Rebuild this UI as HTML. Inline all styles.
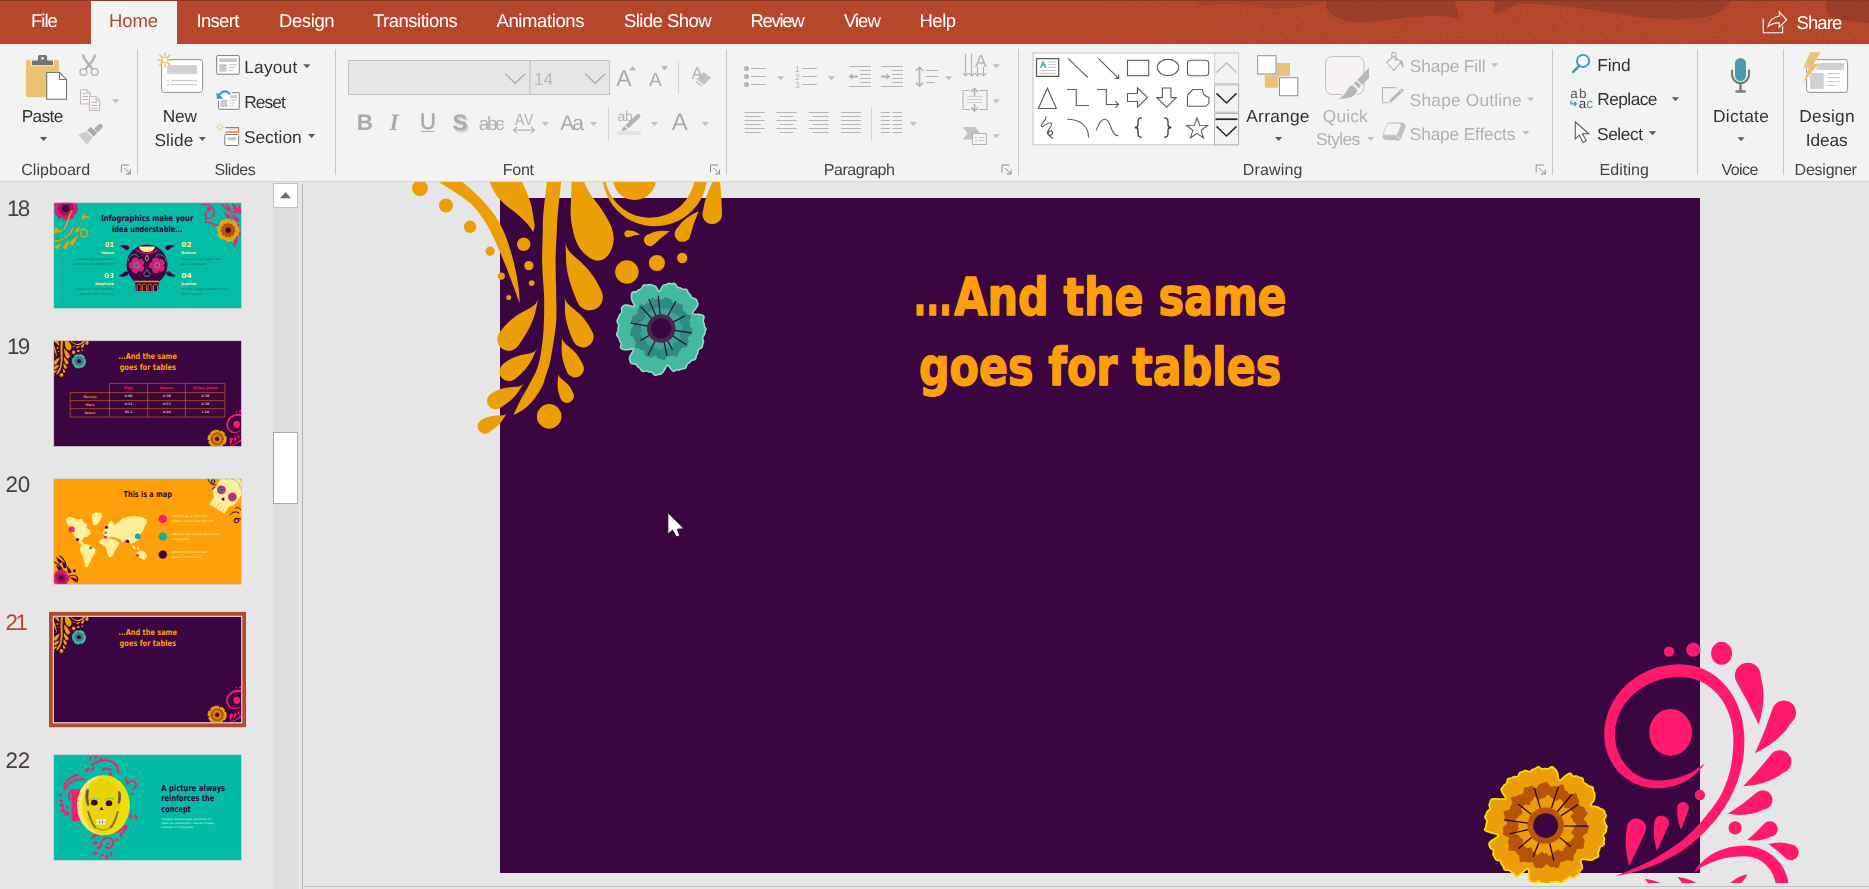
<!DOCTYPE html>
<html lang="en"><head><meta charset="utf-8"><title>PowerPoint</title>
<style>
html,body{margin:0;padding:0}
body{width:1869px;height:889px;overflow:hidden;position:relative;background:#e6e6e6;font-family:"Liberation Sans",sans-serif;text-rendering:geometricPrecision}
.a{position:absolute}
.t{position:absolute;white-space:pre;line-height:normal}
svg{position:absolute;overflow:visible}
#titlebar{left:0;top:0;width:1869px;height:44px;background:#b7472a}
#ribbon{left:0;top:44px;width:1869px;height:137px;background:#f3f3f3;border-bottom:1px solid #d6d6d6}
.sep{position:absolute;width:1px;background:#c8c8c8;top:49px;height:126px}
.ssep{position:absolute;width:1px;background:#d4d4d4}
</style></head><body>
<div id="titlebar" class="a"></div>
<svg class="a" style="left:0;top:0" width="1869" height="44" viewBox="0 0 1869 44">
<path d="M1198.700 0V6.500C1215 4 1225 3.500 1236 3.700C1250 4.500 1262 7.500 1273.600 8.400C1283 8.600 1290 8 1296 7.500C1308 6 1318 3.500 1327 0z" fill="#a7432b"/>
<g fill="#9b3f2a">
<path d="M1326 0V7.500C1330 14 1336 19 1348.500 21.500C1355 22.500 1362 22.300 1367.300 22C1380 21 1392 19 1404.700 17.800C1418 16.500 1430 15.800 1442.200 16C1449 16.500 1455 18 1460 19.700L1455.300 3.700L1455 0z"/>
<path d="M1494.600 0L1493.700 14C1498 12 1503 10 1507.700 8.400C1512 6.500 1516 4.800 1520 3.700C1532 3.500 1545 4.300 1557 5.600C1570 7 1582 8.500 1594.700 10.300C1608 12.300 1620 14 1632 15.900C1645 17.800 1657 19 1669.400 19.200C1679 19.400 1689 19.200 1697.400 18.300C1705 17.500 1711 16 1716 14C1720 12 1723 10 1725.400 7.500C1728 5 1730.500 2.500 1733 0z"/>
<path d="M1826.300 0V9.300C1827 13 1830 15.500 1833.700 16.800C1840 19 1846 20.500 1852.400 21.500C1858 22.300 1864 23 1869 23.300V0z"/>
</g>
<defs><filter id="gr" x="0" y="0" width="100%" height="100%" color-interpolation-filters="sRGB"><feTurbulence type="fractalNoise" baseFrequency=".8" numOctaves="2" seed="3" result="t"/><feColorMatrix in="t" type="matrix" values="0 0 0 0 .42  0 0 0 0 .15  0 0 0 0 .09  0 0 0 -10 3.800"/></filter>
<linearGradient id="gm" x1="0" x2="1"><stop offset="0" stop-color="#fff" stop-opacity="0"/><stop offset=".25" stop-color="#fff" stop-opacity="1"/></linearGradient><mask id="mk"><rect x="1080" y="0" width="789" height="44" fill="url(#gm)"/></mask></defs>
<rect x="1080" y="1" width="789" height="43" filter="url(#gr)" mask="url(#mk)" opacity=".28"/>
<rect x="0" y="0" width="1869" height="1" fill="#8a3822"/>
</svg>

<div id="ribbon" class="a"></div>
<div class="a" style="left:91px;top:1px;width:86px;height:44px;background:#f3f3f3"></div>
<div class="sep" style="left:137px"></div>
<div class="sep" style="left:335px"></div>
<div class="sep" style="left:726px"></div>
<div class="sep" style="left:1018px"></div>
<div class="sep" style="left:1552px"></div>
<div class="sep" style="left:1697px"></div>
<div class="sep" style="left:1783px"></div>
<svg class="a" style="left:0;top:0" width="1869" height="190" viewBox="0 0 1869 190">
<defs>
<path id="dd" d="M0 0h7.2l-3.6 4z"/>
<g id="burst"><g stroke="#eec46e" stroke-width="1.5" stroke-linecap="butt"><path d="M0-7.6V7.6M-7.6 0H7.6M-5.4-5.4L5.4 5.4M-5.4 5.4L5.4-5.4"/></g><circle r="2.7" fill="#fff" stroke="#eec46e" stroke-width=".8"/></g>
<g id="dlg" fill="none" stroke="#8c8c8c" stroke-width="1"><path d="M.5 8V.5H8M3.5 3.5l6 6M9.5 5v4.5H5"/></g>
</defs>
<!-- ===== Clipboard ===== -->
<rect x="25.9" y="59.8" width="33.2" height="37.4" rx="2.6" fill="#ebc274"/>
<rect x="30.9" y="59.6" width="23.1" height="6.6" fill="#f3f3f3"/>
<path d="M38 60.5v-3.7a1.8 1.8 0 0 1 1.8-1.8h5.5a1.8 1.8 0 0 1 1.8 1.8v3.7h4.5a1.4 1.4 0 0 1 1.4 1.4v3.3h-21.1v-3.3a1.4 1.4 0 0 1 1.4-1.4z" fill="#737373"/>
<circle cx="42.6" cy="58.4" r="1.4" fill="#f3f3f3"/>
<path d="M46.7 72.5h12.9l6.9 6.9v19.8h-19.8z" fill="#fff" stroke="#737373" stroke-width="1.1"/>
<path d="M59.4 72.6v6.9h7" fill="none" stroke="#737373" stroke-width="1.1"/>
<use href="#dd" x="40" y="137" fill="#5a5a5a"/>
<!-- cut -->
<g fill="none" stroke="#b3b3b3">
<path d="M83.2 54.6c0 3.5 2.5 6.5 5.8 10.3l4.2 4.6M95 54.6c0 3.5-2.500 6.500-5.800 10.300l-4.200 4.600" stroke-width="2.400"/>
<circle cx="83.400" cy="72" r="3.400" stroke-width="1.300"/><circle cx="94.700" cy="72" r="3.400" stroke-width="1.300"/>
</g>
<!-- copy -->
<g fill="#f8f1f8" stroke="#b9b9b9" stroke-width="1">
<path d="M80.500 89.800h6.600l3.400 3.400v10.700h-10z"/><path d="M87 89.900v3.400h3.400" fill="none"/>
<path d="M89.500 96.500h6.600l3.600 3.600v10.400h-10.200z"/><path d="M96 96.600v3.600h3.600" fill="none"/>
<path d="M82.500 93.500h3M82.500 96.500h5.500M82.500 99.500h5.500M91.500 102.500h6M91.500 105.500h6M91.500 108.300h6" fill="none"/>
</g>
<use href="#dd" x="112" y="99.300" fill="#bdbdbd"/>
<!-- format painter -->
<g>
<path d="M96.200 130.800l4.500-4.600a1.600 1.600 0 0 0-3.500-3.500l-4.500 4.600z" fill="#b0b0b0" transform="translate(1.300 1.800)"/>
<path d="M87.300 130.200l3.500-3.500 6.300 6.300-3.500 3.500z" fill="#a9a9a9"/>
<path d="M86.300 131.200l6.300 6.300-5.700 7.200-8.600-10z" fill="#cdcdcd"/>
</g>
<use href="#dlg" x="120.800" y="164.500"/>
<!-- ===== Slides ===== -->
<rect x="161.600" y="59.600" width="41" height="32.800" rx="2.800" fill="#fff" stroke="#8e8e8e" stroke-width="1"/>
<rect x="167.200" y="65.200" width="29.800" height="8.600" fill="#d0d0d0"/>
<path d="M167.200 80.700h1.800M171.200 80.700h25.800M167.200 84.700h1.800M171.200 84.700h25.800" stroke="#c2c2c2" stroke-width="1"/>
<use href="#burst" x="164.900" y="60"/>
<use href="#dd" x="198.800" y="137" fill="#5a5a5a"/>
<!-- layout -->
<rect x="216.700" y="55.600" width="22.600" height="18.600" rx="1.200" fill="#fff" stroke="#7c7c7c" stroke-width="1"/>
<rect x="219.200" y="58.300" width="17.600" height="3.700" fill="#c9c9c9"/>
<rect x="219.200" y="64.100" width="7.400" height="7.600" fill="#c9c9c9"/>
<path d="M228.900 64.700h7.900M228.900 67.500h6M228.900 70.400h4.500" stroke="#c2c2c2" stroke-width="1"/>
<use href="#dd" x="303.200" y="64.200" fill="#5a5a5a"/>
<!-- reset -->
<rect x="218.500" y="92.700" width="20.800" height="16.600" rx="1.200" fill="#fff" stroke="#7c7c7c" stroke-width="1"/>
<rect x="230.500" y="95.200" width="6.500" height="2.800" fill="#c9c9c9"/>
<rect x="220.400" y="99.600" width="7" height="7.400" fill="#c9c9c9"/>
<path d="M229.500 100.200h7.400M229.500 103h6M229.500 105.800h4.500" stroke="#c2c2c2" stroke-width="1"/>
<path d="M216 91.500h16v3.500h-10v6h-6z" fill="#f3f3f3"/>
<path d="M230 94.500c-1.500-3.200-6-4.200-9-1.500l-2.200 2.300" fill="none" stroke="#3c9db3" stroke-width="2.200"/>
<path d="M216.400 92.400l.5 6.600 6.600-.6z" fill="#3c9db3"/>
<!-- section -->
<use href="#burst" transform="translate(220.300 127.300) scale(.54)"/>
<path d="M225.500 127.700h13v4.400h-13" fill="none" stroke="#d0702a" stroke-width="1.200"/>
<rect x="224.800" y="134.500" width="13.800" height="11" rx="1" fill="#fff" stroke="#7c7c7c" stroke-width="1"/>
<rect x="227.400" y="137" width="8.400" height="3.400" fill="#c9c9c9"/>
<use href="#dd" x="308" y="134" fill="#5a5a5a"/>
<!-- ===== Font ===== -->
<rect x="348.500" y="60.500" width="261" height="34" fill="#e6e6e6" stroke="#c3c3c3" stroke-width="1"/>
<path d="M530 60.500v34" stroke="#c3c3c3" stroke-width="1.200"/>
<path d="M505.200 73.700l10 9.600 10-9.600M585.200 73.700l10 9.600 10-9.600" fill="none" stroke="#ababab" stroke-width="1.300"/>
<path d="M629 70.200l3.500-4 3.500 4zM661 66.200h7l-3.500 4z" fill="#b3b3b3"/>
<path d="M678.500 61v33M608.500 108v32" stroke="#d4d4d4" stroke-width="1"/>
<!-- clear formatting eraser -->
<path d="M703.600 72.800l6.600 5-6.300 6.200-6.800-4.700z" fill="#c4c4c4" stroke="#c4c4c4" stroke-width="1.200" stroke-linejoin="round"/>
<path d="M696 81.600l6 4.300" stroke="#c4c4c4" stroke-width="1.600"/>
<!-- U underline, abc strike, AV arrow -->
<path d="M421 131.500h13" stroke="#ababab" stroke-width="1.100"/>
<path d="M479.500 124.900h24.800" stroke="#b3b3b3" stroke-width="1"/>
<path d="M513.500 130.100h21M517 127l-3.500 3.100 3.500 3.100M531 127l3.500 3.100-3.500 3.100" fill="none" stroke="#b3b3b3" stroke-width="1.200"/>
<use href="#dd" x="541.800" y="122" fill="#c0c0c0"/>
<use href="#dd" x="589.900" y="122" fill="#c0c0c0"/>
<use href="#dd" x="650.900" y="122" fill="#c0c0c0"/>
<use href="#dd" x="701.800" y="122" fill="#c0c0c0"/>
<!-- highlighter -->
<rect x="616.900" y="131" width="24" height="4" fill="#e4e0e4"/>
<path d="M636.800 114.600a2.100 2.100 0 0 1 3 3l-11.200 10.600-3.500-2.700zM624.200 126.300l3.400 2.800-3.200 1.600h-3.300z" fill="#b3b3b3"/>
<use href="#dlg" x="710" y="164.500"/>
<!-- ===== Paragraph ===== -->
<g stroke="#b5b5b5" stroke-width="1" fill="none">
<!-- bullets -->
<path d="M751 68.500h15M751 76.500h15M751 84.500h15"/>
<!-- numbering -->
<path d="M802 68.500h15M802 76.500h15M802 84.500h15"/>
<!-- decrease indent -->
<path d="M849 66.500h22M860 70.500h11M860 74.500h11M860 78.500h11M860 82.500h11M849 86.500h22"/>
<!-- increase indent -->
<path d="M881 66.500h22M892 70.500h11M892 74.500h11M892 78.500h11M892 82.500h11M881 86.500h22"/>
<!-- line spacing -->
<path d="M926 70.500h12M926 76.500h12M926 82.500h9"/>
<!-- align -->
<path d="M744.600 112.500h20M744.600 116.500h16M744.600 120.500h20M744.600 124.500h16M744.600 128.500h20M744.600 132.500h16"/>
<path d="M776.700 112.500h20M779.700 116.500h14M776.700 120.500h20M779.700 124.500h14M776.700 128.500h20M779.700 132.500h14"/>
<path d="M808.800 112.500h20M812.800 116.500h16M808.800 120.500h20M812.800 124.500h16M808.800 128.500h20M812.800 132.500h16"/>
<path d="M840.900 112.500h20M840.900 116.500h20M840.900 120.500h20M840.900 124.500h20M840.900 128.500h20M840.900 132.500h20"/>
<path d="M880.700 112.500h9.500M892.500 112.500h9.500M880.700 116.500h9.500M892.500 116.500h9.500M880.700 120.500h9.500M892.500 120.500h9.500M880.700 124.500h9.500M892.500 124.500h9.500M880.700 128.500h9.500M892.500 128.500h9.500M880.700 132.500h9.500M892.500 132.500h9.500"/>
</g>
<g fill="#b3b3b3">
<circle cx="746.500" cy="68.500" r="2.500"/><circle cx="746.500" cy="76.500" r="2.500"/><circle cx="746.500" cy="84.500" r="2.500"/>
<!-- indent arrows -->
<path d="M858 76.500h-5.500v2.300l-4-3.300 4-3.300v2.300h5.500z" transform="translate(0 1)"/>
<path d="M881 75.500h5.500v-2.300l4 3.300-4 3.300v-2.300h-5.500z"/>
</g>
<!-- line spacing arrow -->
<g stroke="#b3b3b3" stroke-width="1.600" fill="none"><path d="M919.500 68v17M916 70.800l3.500-3.500 3.500 3.500M916 82.600l3.500 3.500 3.500-3.500"/></g>
<path d="M871.500 108v32" stroke="#d4d4d4" stroke-width="1"/>
<use href="#dd" x="777" y="76.200" fill="#c0c0c0"/>
<use href="#dd" x="827.800" y="76.200" fill="#c0c0c0"/>
<use href="#dd" x="945" y="76.200" fill="#c0c0c0"/>
<use href="#dd" x="909.700" y="122" fill="#c0c0c0"/>
<use href="#dd" x="992.700" y="64.200" fill="#c0c0c0"/>
<use href="#dd" x="992.700" y="99.400" fill="#c0c0c0"/>
<use href="#dd" x="992.700" y="134.200" fill="#c0c0c0"/>
<!-- text direction -->
<g stroke="#b3b3b3" stroke-width="1.100" fill="none">
<path d="M965.500 54v22M962.800 73.200l2.700 2.800 2.700-2.800M971.500 54v22M968.800 73.200l2.700 2.800 2.700-2.800M977.500 67v9M974.800 73.200l2.700 2.800 2.700-2.800M983.500 67v9M980.800 73.200l2.700 2.800 2.700-2.800"/>
<!-- align text -->
<path d="M970 90.500h-7v19h7M979 90.500h8v19h-8" stroke-width="1.100"/>
<path d="M967 96.500h15M967 99.500h15M967 102.500h15" stroke="#d0d0d0"/>
</g>
<g stroke="#b3b3b3" stroke-width="1.700" fill="none"><path d="M974.500 89v7M971 92l3.500-3.500 3.500 3.500M974.500 104v7M971 107.500l3.500 3.500 3.500-3.500"/></g>
<!-- smartart -->
<path d="M962.800 127h12.500l4.700 6.300-4.700 6.300h-12.500l4.700-6.300z" fill="#c4c4c4"/>
<rect x="972.500" y="133.500" width="14" height="11" fill="#f8f1f8" stroke="#b3b3b3" stroke-width="1"/>
<path d="M975 137.500h2M978.500 137.500h6M975 140.500h2M978.500 140.500h6" stroke="#c4c4c4" stroke-width="1"/>
<use href="#dlg" x="1001.500" y="164.500"/>
<!-- ===== Drawing: shapes gallery ===== -->
<rect x="1033" y="53" width="205.500" height="91.800" fill="#fff" stroke="#c6c6c6" stroke-width="1"/>
<rect x="1214.600" y="53" width="24" height="30.500" fill="#f3f3f3" stroke="#d0d0d0" stroke-width="1"/>
<rect x="1214.600" y="84.800" width="24" height="27.400" fill="#f3f3f3" stroke="#b5b5b5" stroke-width="1"/>
<rect x="1214.600" y="113.500" width="24" height="31.300" fill="#f3f3f3" stroke="#b5b5b5" stroke-width="1"/>
<path d="M1216.500 72.500l10-9.600 10 9.600" fill="none" stroke="#b9b9b9" stroke-width="1.300"/>
<path d="M1216.500 93.400l10 9.600 10-9.600M1216.500 126.400l10 9.600 10-9.600" fill="none" stroke="#2b2b2b" stroke-width="1.500"/>
<path d="M1215.500 119.200h22" stroke="#2b2b2b" stroke-width="1.800"/>
<g fill="none" stroke="#5c5c5c" stroke-width="1.100">
<rect x="1036.500" y="58.600" width="22.200" height="17.800" fill="#fff" stroke-width="1.300"/>
<path d="M1068 58.400l20 19.300"/>
<path d="M1098.300 58.400l20.300 20M1114.600 78.400h4v-4"/>
<rect x="1127.500" y="60.300" width="21.200" height="15.400"/>
<ellipse cx="1168" cy="67.500" rx="10.700" ry="8.100"/>
<rect x="1187.500" y="60.300" width="21.200" height="15.400" rx="3.200"/>
<path d="M1047.400 88.200l9 20.300h-18z"/>
<path d="M1067.100 89.500h9.200v16h12.700"/>
<path d="M1097.200 89.500h9.100v15h12M1115.100 101.200l3.500 3.300-3.500 3.300"/>
<path d="M1127.500 93.500h10v-5.600l10 9.600-10 9.600v-5.600h-10z"/>
<path d="M1162.400 88h8.500v9.600h5.500l-9.800 9.600-9.800-9.600h5.600z"/>
<path d="M1192.800 89.500h9.800a6.800 6.800 0 0 0 6.300 7.700v6.100l-3 3h-18.400v-11.300z"/>
<path d="M1045.800 116.300c1.500 4-5 6.500-4.500 9.500 .8 3.500 7.500-5.500 10-2.500 2 3-6 7.500-3.500 11 2 2.500 6-.5 4.500-2.500-1.500-2-4.500 0-4 2 .5 2.500 3 3.500 5 5"/>
<path d="M1067.100 119.300c12 0 21.500 6 21.500 18.200"/>
<path d="M1096.300 130.400c2.500-7.500 5-11.200 8.500-11.200 7 0 5 16.500 13.800 16.500"/>
<path d="M1141.800 117.800c-3 0-3.800 1-3.800 3.500v3.500c0 2-1.500 2.700-3.300 2.700 1.800 0 3.300.7 3.300 2.700v3.500c0 2.500.8 3.500 3.800 3.500" stroke-width="1.300" stroke="#3a3a3a"/>
<path d="M1164.200 117.800c3 0 3.800 1 3.800 3.500v3.500c0 2 1.500 2.700 3.300 2.700-1.800 0-3.300.7-3.300 2.700v3.500c0 2.500-.8 3.500-3.800 3.500" stroke-width="1.300" stroke="#3a3a3a"/>
<path d="M1197.0 117.9L1199.6 125.3L1207.5 125.5L1201.2 130.3L1203.5 137.8L1197.0 133.3L1190.5 137.8L1192.8 130.3L1186.5 125.5L1194.4 125.3z"/>
</g>
<path d="M1041 64.500h5M1048.300 62h7.800M1048.300 64.600h7.800M1048.300 67.300h7.800M1039.300 70.500h16.800M1039.300 73.300h16.800" stroke="#c4c4c4" stroke-width="1"/>
<!-- Arrange -->
<rect x="1276.800" y="63" width="13.200" height="13" fill="#ebc274"/>
<rect x="1264.800" y="75.300" width="13.600" height="12.500" fill="#ebc274"/>
<rect x="1257.700" y="55.700" width="18.300" height="18.300" fill="#fff" stroke="#8e8e8e" stroke-width="1"/>
<rect x="1279.500" y="77.700" width="18.300" height="18" fill="#fff" stroke="#8e8e8e" stroke-width="1"/>
<use href="#dd" x="1275" y="137" fill="#5a5a5a"/>
<!-- Quick styles -->
<rect x="1325.500" y="56.500" width="38.500" height="38" rx="7" fill="#f6f2f6" stroke="#c0c0c0" stroke-width="1"/>
<path d="M1369 67.700v10.200l-6.700 6.800-5.100-4.700z" fill="#b7b7b7"/>
<path d="M1356.200 81l5.100 4.700-2.500 2.500-5.100-4.700z" fill="#b7b7b7"/>
<path d="M1352.700 84.600l5 4.600c.5 3-2.500 8.300-9.500 9.300-4 .6-8.500.9-12 1 5.500-2.500 8.500-6 10.500-10 1.500-3 3.500-4.700 6-4.900z" fill="#b7b7b7" stroke="#f3f3f3" stroke-width="1.200"/>
<use href="#dd" x="1367" y="137" fill="#c0c0c0"/>
<!-- shape fill -->
<g fill="none" stroke="#b7b7b7" stroke-width="1.100">
<path d="M1393.800 56.300l7.300 5.700-7.300 8.400-7.300-7.800z" fill="#f6f2f6"/>
<path d="M1391.700 57.800v-3.300a2.100 2.100 0 0 1 4.200 0v5"/>
</g>
<circle cx="1395.800" cy="59.600" r="1.300" fill="#b7b7b7"/>
<path d="M1400.500 59.500c2.200 1.200 3.500 4 2.800 9.300-1.200-2.500-2-4-3.600-5.300z" fill="#b7b7b7"/>
<use href="#dd" x="1491" y="63.300" fill="#c0c0c0"/>
<!-- shape outline -->
<path d="M1396.500 87.600h-14v15.200h6" fill="none" stroke="#b7b7b7" stroke-width="1.100"/>
<path d="M1401.800 88.300l2.300 2.300-11.800 11-3.600 1.400 1.400-3.600z" fill="#b7b7b7"/>
<path d="M1400 89.800l2.400 2.400" stroke="#f3f3f3" stroke-width=".8"/>
<use href="#dd" x="1527" y="97.400" fill="#c0c0c0"/>
<!-- shape effects -->
<path d="M1390 122.600h11.500c3 0 4.800 2.500 3.700 5.300l-4.200 10.500c-.7 1.700-1.800 2.300-3.500 2.200l-12-.8c-2.500-.2-3.500-2-2.600-4l4-10.700c.6-1.700 1.600-2.500 3.100-2.500z" fill="#c0c0c0"/>
<path d="M1390.300 123.300h8.300c2 0 3 1.400 2.200 3.300l-2.900 6.800c-.6 1.300-1.500 1.800-2.800 1.800h-9.200c-2 0-2.900-1.300-2.200-3.100l3-6.700c.6-1.400 1.600-2.100 3.200-2.100z" fill="#f6f2f6" stroke="#c6c6c6" stroke-width=".8"/>
<path d="M1396.500 135.200l3.500 4" stroke="#f3f3f3" stroke-width="1"/>
<use href="#dd" x="1522.300" y="131.100" fill="#c0c0c0"/>
<use href="#dlg" x="1535.700" y="164.500"/>
<!-- ===== Editing ===== -->
<circle cx="1583.100" cy="60.900" r="6" fill="#fff" stroke="#3c9db3" stroke-width="2"/>
<path d="M1578.700 66.300l-5.500 5.600" stroke="#3c9db3" stroke-width="2.600" stroke-linecap="round"/>
<path d="M1571 100.500v3.300h5.200M1574.300 101.600l2.200 2.200-2.200 2.200" fill="none" stroke="#3c9db3" stroke-width="1.300"/>
<path d="M1575.300 121.800v17.200l3.900-3.800 3.900 7.300 3.200-1.700-3.800-7h6.200z" fill="#fff" stroke="#5c5c5c" stroke-width="1.100" stroke-linejoin="miter"/>
<use href="#dd" x="1671.800" y="97.200" fill="#5a5a5a"/>
<use href="#dd" x="1648.900" y="131.200" fill="#5a5a5a"/>
<!-- ===== Voice ===== -->
<rect x="1735" y="57.900" width="11" height="23.100" rx="5.500" fill="#4a9bb0"/>
<path d="M1732 70.600v4a8.500 8.500 0 0 0 17 0v-4" fill="none" stroke="#7c7c7c" stroke-width="2.200" stroke-linecap="round"/>
<path d="M1740.500 83.500v7.500" stroke="#7c7c7c" stroke-width="2.400"/>
<rect x="1735.300" y="90.200" width="10.500" height="2.600" rx="1" fill="#7c7c7c"/>
<use href="#dd" x="1737.500" y="137.200" fill="#5a5a5a"/>
<!-- ===== Designer ===== -->
<rect x="1806.600" y="59.600" width="41" height="32.800" rx="2.800" fill="#fff" stroke="#8e8e8e" stroke-width="1"/>
<rect x="1816.300" y="63.100" width="27.800" height="6.800" fill="#d0d0d0"/>
<rect x="1810.100" y="73" width="13.600" height="15.800" fill="#d0d0d0"/>
<path d="M1827.200 73.600h12.800M1827.200 77.700h12.800M1827.200 81.700h12.800M1827.200 85.400h7.700" stroke="#c2c2c2" stroke-width="1"/>
<path d="M1810.100 52.200h10.500l-7 11.500h5.200l-15.500 18.600 5.600-14.500h-5.600z" fill="#ebc274" stroke="#f6f6f6" stroke-width="1" paint-order="stroke"/>
<!-- Share icon -->
<g fill="none" stroke="#fff" stroke-width="1.100">
<path d="M1763.200 18.600v14.200h19.400v-6.200"/>
<path d="M1768.100 26.600c1-6 5-9.500 11.100-10.300v-4.500l7.400 8-7.400 7.700v-4.600c-5-.3-8.300 1-11.100 3.700z"/>
</g>
</svg>

<div class="a" style="left:304px;top:886px;width:1565px;height:1px;background:#c4c4c4"></div>
<svg class="a" style="left:0;top:0" width="310" height="889" viewBox="0 0 310 889">
<defs><clipPath id="tc0"><rect x="53.8" y="202.8" width="187.5" height="105.5"/></clipPath><clipPath id="tc1"><rect x="53.8" y="340.8" width="187.5" height="105.5"/></clipPath><clipPath id="tc2"><rect x="53.8" y="478.8" width="187.5" height="105.5"/></clipPath><clipPath id="tc3"><rect x="53.8" y="616.8" width="187.5" height="105.5"/></clipPath><clipPath id="tc4"><rect x="53.8" y="754.8" width="187.5" height="105.5"/></clipPath></defs>
<rect x="273.5" y="183" width="24" height="706" fill="#dddddb"/>
<rect x="273.5" y="183.500" width="24" height="24" fill="#fff" stroke="#c2c2c2" stroke-width="1"/>
<path d="M280 198.200l5.500-6.300 5.500 6.300z" fill="#6a6e6a"/>
<rect x="273.5" y="432.500" width="24" height="71" fill="#fff" stroke="#ababab" stroke-width="1"/>
<rect x="302" y="184" width="1" height="705" fill="#b4b4b4"/>
<rect x="53.8" y="202.8" width="187.5" height="105.5" fill="#02bca5"/><g clip-path="url(#tc0)"><path d="M77.9 208.3L78 208.5L78.1 208.7L78.1 208.9L78 209.2L78 209.4L77.9 209.6L77.9 209.8L77.9 210L77.9 210.2L77.9 210.4L77.8 210.6L77.7 210.8L77.5 211L77.3 211.2L77.1 211.3L76.9 211.5L76.8 211.7L76.8 211.9L76.8 212.1L76.8 212.3L76.9 212.5L76.9 212.8L76.8 213L76.7 213.2L76.6 213.3L76.5 213.5L76.4 213.7L76.3 213.9L76.2 214.1L76.1 214.3L76 214.4L75.8 214.5L75.5 214.6L75.2 214.6L74.8 214.6L74.5 214.6L74.2 214.6L74 214.7L73.8 214.8L73.7 214.9L73.6 215.1L73.5 215.3L73.5 215.5L73.4 215.7L73.4 215.9L73.3 216.1L73.3 216.3L73.3 216.6L73.3 216.9L73.3 217.3L73.3 217.6L73.3 217.9L73.2 218.1L73.1 218.3L72.9 218.4L72.6 218.4L72.4 218.5L72.2 218.5L71.9 218.5L71.8 218.6L71.6 218.7L71.4 218.8L71.2 218.9L71 218.9L70.8 218.9L70.5 218.9L70.3 219L70.1 219L70 219.1L69.8 219.3L69.7 219.5L69.5 219.8L69.4 220L69.2 220.1L69 220.3L68.8 220.3L68.6 220.3L68.3 220.3L68.1 220.3L67.9 220.3L67.7 220.3L67.5 220.4L67.3 220.4L67.1 220.4L66.8 220.3L66.6 220.2L66.4 220L66.2 219.9L66 219.8L65.8 219.8L65.6 219.8L65.4 219.9L65.2 220L65 220.1L64.8 220.2L64.5 220.2L64.3 220.1L64.1 220.1L64 219.9L63.8 219.8L63.6 219.8L63.4 219.7L63.2 219.5L63 219.4L62.9 219.2L62.7 219L62.6 218.7L62.5 218.4L62.4 218.1L62.3 218L62.1 217.9L62 217.8L61.7 217.9L61.5 217.9L61.3 218L61 218.1L60.8 218.2L60.5 218.2L60.3 218.2L60.1 218.2L59.8 218.3L59.5 218.3L59.3 218.4L59 218.4L58.7 218.4L58.5 218.4L58.3 218.2L58.2 218L58.1 217.8L58 217.5L58 217.3L57.9 217.1L57.7 216.9L57.6 216.8L57.4 216.7L57.3 216.5L57.2 216.3L57.1 216.2L57 216L56.9 215.8L56.8 215.6L56.6 215.5L56.4 215.4L56.1 215.3L55.9 215.3L55.6 215.2L55.4 215.1L55.3 214.9L55.2 214.7L55.1 214.5L55.1 214.2L55.1 214L55 213.8L54.9 213.6L54.8 213.4L54.8 213.2L54.7 213L54.7 212.8L54.8 212.5L54.8 212.3L54.9 212.1L54.9 211.8L54.8 211.7L54.7 211.5L54.6 211.3L54.4 211.1L54.3 211L54.2 210.8L54.2 210.6L54.2 210.3L54.3 210.1L54.4 209.9L54.5 209.7L54.6 209.5L54.7 209.3L54.7 209.1L54.8 208.9L54.9 208.7L55 208.5L55.2 208.3L55.3 208.1L55.4 207.9L55.5 207.8L55.4 207.6L55.3 207.4L55.1 207.2L54.9 207L54.8 206.7L54.6 206.5L54.5 206.3L54.4 206.1L54.4 205.9L54.3 205.6L54.3 205.4L54.2 205.2L54.1 204.9L54 204.7L54 204.5L54 204.2L54.1 204L54.3 203.9L54.5 203.7L54.8 203.6L55 203.5L55.1 203.3L55.3 203.2L55.3 203L55.4 202.8L55.5 202.6L55.6 202.4L55.7 202.2L55.9 202.1L56 201.9L56.1 201.8L56.2 201.6L56.2 201.3L56.2 201L56.2 200.8L56.2 200.5L56.3 200.3L56.4 200.1L56.6 200L56.8 199.9L57 199.8L57.2 199.7L57.4 199.6L57.6 199.5L57.8 199.4L57.9 199.2L58.1 199.1L58.3 199.1L58.5 199L58.8 199L59 198.9L59.2 198.9L59.3 198.7L59.5 198.5L59.6 198.3L59.6 198.1L59.7 197.8L59.9 197.6L60 197.5L60.2 197.4L60.5 197.3L60.7 197.3L60.9 197.3L61.1 197.2L61.3 197.2L61.5 197.2L61.8 197.2L62 197.3L62.3 197.4L62.5 197.6L62.8 197.8L63.1 198L63.3 198.2L63.5 198.3L63.7 198.3L63.8 198.2L64 198.1L64.2 198L64.3 197.8L64.5 197.7L64.7 197.5L64.8 197.4L65 197.2L65.2 197L65.4 196.8L65.6 196.6L65.8 196.4L66 196.2L66.2 196.1L66.4 196.1L66.6 196.2L66.8 196.4L67 196.5L67.2 196.7L67.4 196.8L67.6 196.8L67.8 196.8L68 196.8L68.2 196.8L68.5 196.8L68.7 196.9L68.8 196.9L69 197L69.2 197L69.5 197L69.7 197L70 196.9L70.2 196.8L70.5 196.8L70.7 196.8L70.9 196.9L71 197.1L71.2 197.3L71.3 197.5L71.5 197.7L71.6 197.8L71.8 198L71.9 198.1L72.1 198.2L72.3 198.3L72.4 198.5L72.5 198.7L72.6 198.9L72.8 199.1L72.9 199.2L73.1 199.3L73.3 199.3L73.6 199.4L73.8 199.4L74.1 199.4L74.3 199.5L74.5 199.6L74.6 199.8L74.7 200L74.7 200.3L74.7 200.5L74.8 200.8L74.8 201L74.9 201.2L74.9 201.5L74.9 201.7L74.8 202L74.7 202.3L74.6 202.6L74.5 202.9L74.5 203.1L74.6 203.2L74.7 203.4L74.9 203.4L75.2 203.5L75.5 203.6L75.7 203.7L76 203.8L76.2 203.9L76.4 204L76.6 204.1L76.8 204.3L77 204.4L77.2 204.6L77.4 204.7L77.6 204.9L77.7 205.1L77.7 205.3L77.6 205.6L77.5 205.8L77.4 206L77.3 206.3L77.3 206.5L77.3 206.7L77.4 206.9L77.4 207.1L77.5 207.3L77.6 207.5L77.6 207.7L77.6 207.9L77.6 208.1z" fill="#d81b74"/><path d="M73.4 208.3L73.5 208.4L73.6 208.6L73.6 208.7L73.6 208.8L73.6 209L73.5 209.1L73.5 209.2L73.5 209.4L73.4 209.5L73.4 209.6L73.4 209.8L73.4 209.9L73.4 210.1L73.4 210.2L73.3 210.3L73.2 210.4L73 210.5L72.9 210.6L72.7 210.7L72.6 210.8L72.4 210.8L72.3 210.9L72.2 211L72.2 211.1L72.2 211.3L72.2 211.4L72.2 211.6L72.3 211.7L72.3 211.9L72.3 212L72.2 212.2L72.2 212.3L72.1 212.4L72.1 212.5L72 212.6L71.9 212.8L71.9 212.9L71.9 213L71.8 213.2L71.8 213.3L71.8 213.5L71.7 213.6L71.6 213.7L71.5 213.8L71.4 213.9L71.2 213.9L71 213.9L70.9 213.9L70.7 213.9L70.5 213.9L70.3 213.9L70.2 213.9L70.1 214L70 214.1L69.9 214.2L69.8 214.3L69.8 214.4L69.7 214.5L69.6 214.5L69.4 214.6L69.3 214.7L69.2 214.7L69.1 214.8L69 214.8L68.9 214.9L68.8 215.1L68.7 215.2L68.7 215.4L68.6 215.5L68.5 215.7L68.4 215.8L68.3 215.9L68.1 216L68 216L67.9 216L67.7 215.9L67.5 215.8L67.4 215.8L67.2 215.7L67.1 215.7L67 215.6L66.8 215.6L66.7 215.7L66.6 215.7L66.4 215.7L66.3 215.7L66.2 215.6L66.1 215.6L65.9 215.5L65.8 215.4L65.7 215.4L65.6 215.3L65.4 215.3L65.3 215.4L65.2 215.4L65 215.5L64.9 215.6L64.8 215.8L64.6 215.9L64.5 215.9L64.3 216L64.2 216L64 216L63.9 215.9L63.8 215.9L63.7 215.8L63.5 215.7L63.4 215.6L63.3 215.6L63.2 215.5L63 215.5L62.9 215.4L62.8 215.4L62.7 215.3L62.6 215.2L62.5 215.1L62.4 214.9L62.4 214.8L62.3 214.6L62.3 214.4L62.2 214.3L62.1 214.2L62 214.2L61.9 214.1L61.7 214.1L61.6 214.1L61.4 214.1L61.2 214.2L61.1 214.1L60.9 214.1L60.8 214L60.7 214L60.6 213.9L60.5 213.8L60.4 213.7L60.3 213.6L60.2 213.6L60 213.5L59.9 213.4L59.8 213.4L59.7 213.3L59.5 213.2L59.5 213.1L59.4 212.9L59.4 212.8L59.4 212.6L59.5 212.4L59.5 212.2L59.6 212L59.6 211.9L59.6 211.7L59.6 211.6L59.5 211.5L59.4 211.4L59.3 211.3L59.2 211.2L59.1 211.1L59 211L58.9 210.9L58.9 210.8L58.9 210.7L58.8 210.6L58.8 210.5L58.7 210.3L58.6 210.2L58.5 210.1L58.4 210L58.2 209.9L58.1 209.8L58 209.7L57.9 209.6L57.9 209.4L57.9 209.3L57.9 209.1L58 209L58.1 208.8L58.2 208.7L58.3 208.6L58.4 208.4L58.4 208.3L58.5 208.2L58.5 208L58.5 207.9L58.5 207.8L58.5 207.7L58.5 207.5L58.6 207.4L58.6 207.3L58.7 207.2L58.8 207.1L58.8 206.9L58.9 206.8L58.9 206.7L58.8 206.6L58.8 206.4L58.7 206.3L58.6 206.1L58.5 205.9L58.4 205.8L58.4 205.6L58.4 205.5L58.4 205.3L58.5 205.2L58.6 205.1L58.7 205L58.8 204.9L58.9 204.8L59 204.7L59.1 204.6L59.2 204.5L59.3 204.4L59.4 204.3L59.4 204.2L59.5 204.1L59.7 204L59.8 203.9L60 203.9L60.1 203.9L60.3 203.8L60.4 203.8L60.5 203.7L60.6 203.6L60.7 203.5L60.7 203.4L60.7 203.2L60.7 203L60.7 202.9L60.7 202.7L60.8 202.5L60.9 202.4L60.9 202.3L61 202.2L61.2 202.1L61.3 202.1L61.4 202L61.5 201.9L61.6 201.8L61.7 201.7L61.8 201.6L61.9 201.5L62 201.4L62.1 201.4L62.2 201.3L62.4 201.3L62.6 201.4L62.7 201.4L62.9 201.5L63.1 201.6L63.2 201.6L63.4 201.7L63.5 201.7L63.6 201.6L63.7 201.5L63.8 201.4L63.9 201.3L64 201.2L64.1 201.1L64.3 201.1L64.4 201L64.5 201L64.6 201L64.8 200.9L64.9 200.9L65 200.8L65.1 200.8L65.3 200.7L65.4 200.6L65.5 200.5L65.7 200.4L65.8 200.3L65.9 200.3L66.1 200.3L66.2 200.4L66.3 200.5L66.5 200.6L66.6 200.7L66.7 200.9L66.8 201L66.9 201.1L67.1 201.2L67.2 201.2L67.3 201.2L67.4 201.2L67.6 201.3L67.7 201.3L67.8 201.3L67.9 201.4L68 201.4L68.1 201.5L68.3 201.6L68.4 201.6L68.5 201.6L68.6 201.6L68.8 201.6L68.9 201.6L69.1 201.5L69.3 201.4L69.5 201.4L69.6 201.4L69.8 201.4L69.9 201.4L70 201.5L70.1 201.7L70.2 201.8L70.2 201.9L70.3 202.1L70.4 202.2L70.5 202.3L70.5 202.4L70.6 202.5L70.7 202.6L70.8 202.7L70.9 202.8L71 202.9L71 203.1L71.1 203.2L71.1 203.4L71.1 203.5L71.1 203.7L71.2 203.8L71.2 203.9L71.3 204L71.5 204L71.6 204.1L71.8 204.1L72 204.1L72.2 204.2L72.3 204.2L72.5 204.3L72.6 204.4L72.6 204.5L72.7 204.6L72.7 204.8L72.8 204.9L72.8 205L72.9 205.2L72.9 205.3L73 205.4L73.1 205.5L73.1 205.6L73.2 205.8L73.2 205.9L73.2 206.1L73.1 206.2L73 206.4L72.9 206.5L72.8 206.7L72.8 206.8L72.7 207L72.7 207.1L72.7 207.2L72.8 207.3L72.9 207.4L73 207.5L73.1 207.7L73.2 207.8L73.2 207.9L73.3 208L73.3 208.2z" fill="#a4125c"/><circle cx="65.800" cy="208.300" r="3.600" fill="#3a0540"/><g fill="none" stroke="#eb9e06" stroke-width="1.500" stroke-linecap="round"><path d="M54 232c6 1 11-2 13-8s2-10 5-13M76 232c3-3 9-4 11-1s-1 7-4 6-3-4-1-5M83 219c2-3 5-3 6-1M54 241c9 0 16-5 19-13"/></g><g fill="#eb9e06"><circle cx="57" cy="230" r="2.600"/><path d="M78 235Q76.4 239.8 73.8 243.9A2 2 0 1 1 70.7 241.5Q73.9 237.9 78 235z"/><path d="M70 240Q68.8 244.2 66.9 247.8A2 2 0 1 1 63.7 245.5Q66.4 242.4 70 240z"/><path d="M62 243Q60.5 245.8 58.5 248A1.8 1.8 0 1 1 56.3 245.3Q58.9 243.9 62 243z"/><path d="M80 226Q79 229.1 77.5 231.7A1.6 1.6 0 1 1 75 229.7Q77.2 227.6 80 226z"/><path d="M86 213Q85.4 215.4 84.3 217.5A1.4 1.4 0 1 1 82.2 215.9Q83.8 214.3 86 213z"/></g><g fill="none" stroke="#ff1a6e" stroke-width="1.400" stroke-linecap="round"><path d="M202 205c6-2 11 1 12 6s-3 8-6 7-4-5-1-6M205 222c8 1 16 4 21 9M222 204c3 5 8 8 14 9M234 246c3-6 5-13 4-22"/></g><g fill="#ff1a6e"><circle cx="209" cy="209" r="2.200"/><path d="M226 203Q228.6 205.1 230.4 207.6A2 2 0 1 1 227 209.3Q226.2 206.3 226 203z"/><path d="M232 203Q235.2 205.5 237.5 208.4A2.2 2.2 0 1 1 233.9 210.5Q232.5 207 232 203z"/><path d="M238 204Q240.4 207.4 241.8 211.1A2 2 0 1 1 238 212Q237.5 208.1 238 204z"/><path d="M224 212Q227.3 213.3 230 215.2A2 2 0 1 1 227.2 218Q225.3 215.3 224 212z"/><path d="M231 214Q234.9 215.7 238.1 218.1A2.2 2.2 0 1 1 235.1 221.1Q232.7 217.9 231 214z"/><path d="M236 240Q236.2 236.2 237.2 232.7A1.8 1.8 0 1 1 240.4 234.1Q238.6 237.2 236 240z"/><path d="M233 247Q233.4 243.6 234.4 240.6A1.6 1.6 0 1 1 237.2 242Q235.5 244.7 233 247z"/><circle cx="206" cy="219" r="1.200"/><circle cx="213" cy="226" r="1"/></g><path d="M239.2 230.2L239.3 230.4L239.4 230.6L239.4 230.8L239.3 231L239.3 231.2L239.2 231.4L239.2 231.6L239.2 231.8L239.2 232L239.1 232.1L239 232.3L238.8 232.5L238.6 232.6L238.4 232.8L238.3 232.9L238.3 233.1L238.3 233.3L238.4 233.5L238.4 233.8L238.4 234L238.4 234.2L238.3 234.3L238.3 234.5L238.2 234.7L238.2 234.9L238.2 235.2L238.2 235.4L238.1 235.5L238 235.7L237.7 235.8L237.5 235.8L237.2 235.9L236.9 235.9L236.7 236L236.5 236.1L236.4 236.2L236.2 236.3L236 236.4L235.8 236.4L235.6 236.5L235.4 236.5L235.2 236.6L235.1 236.7L235.1 236.9L235 237.1L235 237.3L234.9 237.5L234.9 237.7L234.7 237.8L234.6 237.9L234.5 238.1L234.4 238.2L234.3 238.4L234.2 238.6L234.1 238.8L234 238.9L233.8 239L233.7 239.1L233.5 239.2L233.4 239.3L233.2 239.5L233.1 239.7L233.1 239.9L233 240.2L232.9 240.4L232.7 240.6L232.5 240.6L232.3 240.7L232.1 240.7L231.9 240.7L231.7 240.8L231.6 240.8L231.4 240.9L231.2 240.9L231 240.9L230.7 240.8L230.5 240.7L230.3 240.6L230.1 240.5L229.9 240.6L229.8 240.7L229.6 240.9L229.4 241.1L229.3 241.2L229.1 241.3L228.9 241.3L228.7 241.3L228.5 241.3L228.3 241.4L228.1 241.5L227.9 241.5L227.7 241.6L227.5 241.5L227.3 241.4L227.1 241.2L227 240.9L226.8 240.7L226.6 240.6L226.5 240.5L226.3 240.5L226.1 240.4L225.9 240.4L225.8 240.3L225.6 240.1L225.5 239.9L225.4 239.8L225.2 239.7L225 239.6L224.9 239.6L224.7 239.6L224.5 239.5L224.4 239.4L224.2 239.3L224.1 239.2L224 239L223.8 239L223.6 238.9L223.4 239L223.2 239L223 239L222.8 239L222.6 238.9L222.5 238.9L222.3 238.8L222.1 238.8L221.8 238.8L221.6 238.9L221.3 238.9L221 238.9L220.8 238.9L220.6 238.8L220.5 238.6L220.4 238.4L220.3 238.2L220.2 238.1L220.1 237.9L220 237.8L219.9 237.6L219.8 237.4L219.8 237.2L219.7 237L219.7 236.7L219.7 236.5L219.6 236.4L219.4 236.3L219.1 236.2L218.9 236.2L218.7 236.1L218.5 236L218.4 235.8L218.4 235.6L218.3 235.4L218.2 235.2L218.1 235.1L218 234.9L218 234.7L218 234.5L218.1 234.2L218.3 234L218.5 233.7L218.7 233.4L218.9 233.2L219 233L219 232.8L218.9 232.7L218.9 232.5L218.8 232.3L218.8 232.2L218.7 232L218.6 231.9L218.5 231.7L218.3 231.6L218 231.4L217.8 231.3L217.5 231.1L217.4 230.9L217.3 230.8L217.4 230.6L217.4 230.4L217.5 230.2L217.5 230L217.5 229.8L217.4 229.6L217.4 229.5L217.4 229.3L217.4 229.1L217.5 228.9L217.5 228.7L217.5 228.5L217.5 228.3L217.3 228.1L217.2 227.9L217.1 227.7L217 227.4L217.1 227.2L217.2 227.1L217.4 226.9L217.5 226.8L217.7 226.6L217.8 226.5L218 226.3L218.1 226.2L218.3 226L218.5 225.9L218.7 225.8L219 225.8L219.3 225.7L219.4 225.6L219.6 225.5L219.6 225.3L219.7 225.1L219.8 225L219.8 224.8L220 224.7L220.1 224.6L220.2 224.5L220.3 224.3L220.3 224.1L220.3 223.9L220.3 223.7L220.3 223.4L220.4 223.3L220.5 223.1L220.7 223L220.8 222.9L221 222.8L221.1 222.7L221.1 222.5L221.2 222.2L221.2 222L221.3 221.7L221.3 221.6L221.5 221.4L221.6 221.3L221.8 221.1L221.9 221L222 220.8L222.1 220.6L222.2 220.4L222.4 220.3L222.6 220.3L222.8 220.3L223.1 220.4L223.3 220.5L223.6 220.5L223.8 220.4L223.9 220.3L224.1 220.2L224.2 220.1L224.4 220L224.6 220L224.8 219.9L224.9 219.9L225.1 219.8L225.3 219.6L225.4 219.4L225.6 219.2L225.7 219L225.9 219L226.1 219L226.3 219.1L226.5 219.2L226.8 219.3L227 219.3L227.1 219.3L227.3 219.3L227.5 219.3L227.7 219.4L227.9 219.5L228.1 219.6L228.3 219.7L228.5 219.7L228.7 219.7L228.8 219.6L229 219.5L229.2 219.4L229.4 219.4L229.6 219.5L229.8 219.7L229.9 219.9L230.1 220.1L230.2 220.3L230.3 220.5L230.5 220.6L230.6 220.7L230.8 220.9L230.9 221L231 221.2L231.2 221.3L231.3 221.4L231.5 221.4L231.7 221.3L231.9 221.2L232.2 221L232.5 220.8L232.7 220.7L232.9 220.7L233.2 220.7L233.4 220.7L233.6 220.7L233.8 220.7L234 220.7L234.3 220.7L234.4 220.8L234.6 221L234.7 221.2L234.7 221.4L234.8 221.7L234.8 221.9L234.9 222.1L235.1 222.2L235.3 222.2L235.5 222.3L235.6 222.4L235.8 222.5L235.9 222.7L236 222.8L236.2 222.9L236.4 223L236.6 223.1L236.8 223.2L236.9 223.3L237 223.5L237.1 223.7L237 224L236.9 224.3L236.8 224.6L236.7 224.8L236.6 225.1L236.6 225.3L236.6 225.5L236.5 225.7L236.5 225.9L236.5 226.1L236.5 226.3L236.6 226.4L236.7 226.5L237 226.6L237.3 226.7L237.6 226.7L237.9 226.8L238.1 226.9L238.3 227.1L238.4 227.2L238.5 227.4L238.6 227.6L238.7 227.8L238.8 227.9L238.9 228.1L238.9 228.3L238.9 228.5L238.8 228.7L238.7 228.9L238.6 229.1L238.6 229.3L238.6 229.5L238.8 229.6L238.9 229.8L239.1 230z" fill="#eb9e06" stroke="#f7dd0c" stroke-width=".5"/><path d="M235.2 230.2L235.3 230.3L235.4 230.5L235.4 230.6L235.4 230.7L235.4 230.8L235.4 231L235.3 231.1L235.3 231.2L235.3 231.3L235.3 231.5L235.3 231.6L235.3 231.7L235.2 231.8L235.2 232L235.1 232.1L235 232.2L234.9 232.3L234.7 232.3L234.5 232.4L234.4 232.5L234.2 232.5L234.1 232.6L234 232.7L234 232.8L234 232.9L234 233.1L234.1 233.2L234.1 233.4L234.1 233.5L234.1 233.7L234.1 233.8L234.1 233.9L234 234L233.9 234.1L233.9 234.3L233.8 234.4L233.8 234.5L233.8 234.6L233.8 234.8L233.8 234.9L233.7 235.1L233.7 235.2L233.6 235.3L233.5 235.4L233.4 235.5L233.2 235.5L233 235.5L232.8 235.4L232.6 235.4L232.5 235.4L232.3 235.4L232.2 235.4L232.1 235.5L232 235.5L231.9 235.6L231.8 235.7L231.8 235.8L231.7 235.9L231.6 236L231.5 236L231.4 236.1L231.3 236.1L231.2 236.2L231.1 236.3L231 236.4L230.9 236.5L230.8 236.6L230.8 236.8L230.7 237L230.6 237.2L230.5 237.3L230.4 237.4L230.3 237.4L230.2 237.5L230 237.4L229.9 237.4L229.7 237.3L229.6 237.2L229.4 237.1L229.3 237.1L229.2 237L229.1 237L228.9 237L228.8 237.1L228.7 237.1L228.6 237L228.5 237L228.3 236.9L228.2 236.9L228.1 236.8L228 236.7L227.9 236.7L227.8 236.7L227.6 236.7L227.5 236.8L227.4 236.9L227.3 237L227.1 237.2L227 237.3L226.8 237.4L226.7 237.4L226.6 237.5L226.4 237.4L226.3 237.4L226.2 237.3L226.1 237.2L226 237.1L225.9 237.1L225.8 237L225.6 237L225.5 236.9L225.4 236.9L225.3 236.8L225.2 236.8L225.1 236.7L225 236.5L225 236.4L224.9 236.2L224.9 236L224.8 235.9L224.8 235.7L224.7 235.6L224.6 235.6L224.5 235.6L224.3 235.6L224.2 235.6L224 235.6L223.8 235.7L223.7 235.7L223.5 235.6L223.4 235.6L223.3 235.5L223.2 235.4L223.1 235.3L223 235.3L222.9 235.2L222.8 235.1L222.7 235.1L222.6 235L222.4 235L222.3 234.9L222.2 234.8L222.1 234.7L222.1 234.6L222.1 234.4L222.1 234.2L222.2 234L222.3 233.8L222.3 233.7L222.4 233.5L222.4 233.4L222.3 233.3L222.3 233.2L222.2 233.1L222.1 233L222 232.9L221.9 232.8L221.8 232.7L221.7 232.6L221.7 232.5L221.6 232.4L221.6 232.3L221.6 232.2L221.5 232.1L221.4 232L221.3 231.9L221.1 231.8L221 231.7L220.8 231.6L220.7 231.5L220.6 231.4L220.6 231.3L220.6 231.1L220.6 231L220.7 230.8L220.9 230.7L221 230.6L221.1 230.4L221.2 230.3L221.3 230.2L221.3 230.1L221.3 230L221.3 229.8L221.3 229.7L221.3 229.6L221.4 229.5L221.4 229.4L221.5 229.3L221.5 229.2L221.6 229.1L221.7 228.9L221.7 228.8L221.7 228.7L221.6 228.6L221.6 228.4L221.5 228.3L221.4 228.1L221.2 228L221.2 227.8L221.1 227.7L221.1 227.5L221.1 227.4L221.2 227.3L221.3 227.2L221.4 227.1L221.6 227L221.7 226.9L221.8 226.8L221.9 226.7L221.9 226.6L222 226.5L222.1 226.4L222.1 226.3L222.2 226.3L222.4 226.2L222.5 226.1L222.7 226.1L222.8 226.1L223 226.1L223.1 226L223.3 226L223.3 225.9L223.4 225.8L223.4 225.6L223.4 225.5L223.4 225.3L223.4 225.1L223.4 224.9L223.4 224.8L223.5 224.7L223.5 224.6L223.6 224.5L223.7 224.4L223.8 224.3L224 224.3L224.1 224.2L224.1 224.1L224.2 224L224.3 223.9L224.4 223.8L224.5 223.7L224.6 223.7L224.8 223.6L224.9 223.7L225.1 223.7L225.2 223.8L225.4 223.9L225.6 224L225.7 224L225.9 224.1L226 224.1L226.1 224L226.2 224L226.3 223.9L226.4 223.8L226.5 223.6L226.6 223.5L226.7 223.5L226.8 223.4L226.9 223.4L227 223.4L227.1 223.3L227.3 223.3L227.4 223.2L227.5 223.2L227.6 223L227.7 222.9L227.8 222.8L228 222.7L228.1 222.7L228.2 222.6L228.4 222.6L228.5 222.7L228.6 222.8L228.7 223L228.8 223.1L229 223.3L229.1 223.4L229.2 223.5L229.3 223.6L229.4 223.6L229.5 223.7L229.6 223.7L229.7 223.7L229.8 223.7L230 223.7L230.1 223.8L230.2 223.8L230.3 223.9L230.4 224L230.5 224L230.6 224L230.7 224L230.9 224L231 223.9L231.2 223.8L231.4 223.8L231.6 223.7L231.7 223.7L231.9 223.7L232 223.7L232.1 223.8L232.2 223.9L232.2 224.1L232.3 224.2L232.3 224.4L232.4 224.5L232.4 224.6L232.5 224.7L232.6 224.8L232.7 224.9L232.8 225L232.9 225.1L232.9 225.2L233 225.3L233 225.5L233 225.6L233 225.8L233 225.9L233 226.1L233.1 226.1L233.2 226.2L233.3 226.3L233.5 226.3L233.7 226.3L233.9 226.3L234.1 226.3L234.2 226.4L234.4 226.4L234.5 226.5L234.5 226.6L234.6 226.8L234.6 226.9L234.6 227L234.7 227.1L234.7 227.3L234.8 227.4L234.9 227.5L234.9 227.6L235 227.7L235 227.8L235 227.9L235 228.1L234.9 228.2L234.8 228.4L234.7 228.5L234.6 228.7L234.5 228.8L234.5 229L234.4 229.1L234.5 229.2L234.5 229.3L234.6 229.4L234.7 229.5L234.8 229.6L234.9 229.7L235 229.8L235.1 230L235.1 230.1z" fill="#b65408"/><circle cx="228.100" cy="230.200" r="2.600" fill="#3a0540"/><g fill="#3a0540"><circle cx="147" cy="265" r="20.500"/><path d="M134.500 276h25l-1.500 15h-22z"/><path d="M119.5 246Q123.6 244.2 126.9 245.6A2.2 2.2 0 1 1 125.9 249.7Q122.9 247.2 119.5 246z"/><path d="M175 246Q171.6 247.2 168.6 249.7A2.2 2.2 0 1 1 167.6 245.6Q170.9 244.2 175 246z"/><path d="M118.5 276Q121.9 274.5 124.8 271.7A2.2 2.2 0 1 1 126.1 275.7Q122.8 277.4 118.5 276z"/><path d="M176 276Q171.7 277.4 168.4 275.7A2.2 2.2 0 1 1 169.7 271.7Q172.6 274.5 176 276z"/></g><path d="M139 246.500a8 5.500 0 0 0 16 0z" fill="#ffee9a"/><path d="M136 249.500c6 5 16 5 22 0" fill="none" stroke="#d81b74" stroke-width="1.300"/><path d="M142.9 265.3L143 265.4L143 265.5L143 265.6L143.1 265.7L143.2 265.9L143.3 266L143.4 266.1L143.6 266.3L143.7 266.4L143.8 266.5L143.9 266.7L144 266.8L144 267L144.1 267.1L144.1 267.3L144.1 267.4L144.2 267.6L144.2 267.7L144.2 267.9L144.1 268L144.1 268.1L144.1 268.3L144 268.4L144 268.5L143.9 268.7L143.9 268.8L143.8 268.9L143.8 269.1L143.7 269.2L143.6 269.3L143.6 269.4L143.5 269.5L143.4 269.7L143.3 269.8L143.3 269.9L143.2 270L143.1 270.1L143 270.2L142.9 270.3L142.8 270.4L142.7 270.5L142.6 270.7L142.5 270.8L142.5 270.9L142.4 271L142.3 271L142.1 271.1L142 271.2L141.9 271.3L141.8 271.4L141.7 271.5L141.6 271.5L141.4 271.6L141.3 271.7L141.2 271.7L141 271.7L140.9 271.7L140.7 271.7L140.6 271.7L140.4 271.7L140.2 271.7L140.1 271.6L139.9 271.6L139.7 271.5L139.6 271.5L139.4 271.4L139.3 271.3L139.1 271.3L139 271.2L138.9 271.2L138.7 271.2L138.6 271.2L138.5 271.3L138.4 271.3L138.3 271.4L138.3 271.6L138.2 271.7L138.1 271.8L138 272L137.9 272.1L137.8 272.3L137.7 272.4L137.6 272.5L137.5 272.7L137.4 272.8L137.2 272.9L137.1 273L137 273L136.8 273.1L136.7 273.2L136.6 273.2L136.4 273.2L136.3 273.2L136.1 273.2L136 273.2L135.9 273.2L135.7 273.2L135.6 273.2L135.4 273.2L135.3 273.2L135.2 273.2L135 273.1L134.9 273.1L134.8 273.1L134.6 273L134.5 273L134.4 273L134.2 272.9L134.1 272.9L134 272.8L133.8 272.8L133.7 272.7L133.6 272.7L133.4 272.6L133.3 272.5L133.2 272.5L133.1 272.4L132.9 272.4L132.8 272.3L132.7 272.2L132.6 272.1L132.5 272L132.4 272L132.3 271.9L132.2 271.8L132.1 271.7L132 271.5L131.9 271.4L131.9 271.3L131.8 271.1L131.8 271L131.7 270.8L131.7 270.6L131.7 270.5L131.7 270.3L131.7 270.1L131.7 269.9L131.7 269.8L131.8 269.6L131.8 269.4L131.8 269.3L131.7 269.2L131.7 269.1L131.7 269L131.6 268.9L131.5 268.8L131.4 268.8L131.2 268.7L131.1 268.7L130.9 268.6L130.8 268.6L130.6 268.5L130.4 268.5L130.2 268.4L130.1 268.4L129.9 268.3L129.8 268.2L129.6 268.1L129.5 268.1L129.4 268L129.3 267.8L129.2 267.7L129.2 267.6L129.1 267.5L129 267.4L129 267.2L128.9 267.1L128.9 267L128.9 266.8L128.8 266.7L128.8 266.6L128.8 266.4L128.8 266.3L128.7 266.1L128.7 266L128.7 265.9L128.7 265.7L128.7 265.6L128.7 265.4L128.7 265.3L128.7 265.2L128.7 265L128.7 264.9L128.7 264.7L128.7 264.6L128.7 264.5L128.8 264.3L128.8 264.2L128.8 264L128.8 263.9L128.9 263.8L128.9 263.6L128.9 263.5L129 263.4L129 263.2L129.1 263.1L129.2 263L129.2 262.9L129.3 262.8L129.4 262.6L129.5 262.5L129.6 262.5L129.8 262.4L129.9 262.3L130.1 262.2L130.2 262.2L130.4 262.1L130.6 262.1L130.8 262L130.9 262L131.1 261.9L131.2 261.9L131.4 261.8L131.5 261.8L131.6 261.7L131.7 261.6L131.7 261.5L131.7 261.4L131.8 261.3L131.8 261.2L131.8 261L131.7 260.8L131.7 260.7L131.7 260.5L131.7 260.3L131.7 260.1L131.7 260L131.7 259.8L131.8 259.6L131.8 259.5L131.9 259.3L131.9 259.2L132 259.1L132.1 258.9L132.2 258.8L132.3 258.7L132.4 258.6L132.5 258.6L132.6 258.5L132.7 258.4L132.8 258.3L132.9 258.2L133.1 258.2L133.2 258.1L133.3 258.1L133.4 258L133.6 257.9L133.7 257.9L133.8 257.8L134 257.8L134.1 257.7L134.2 257.7L134.4 257.6L134.5 257.6L134.6 257.6L134.8 257.5L134.9 257.5L135 257.5L135.2 257.4L135.3 257.4L135.4 257.4L135.6 257.4L135.7 257.4L135.9 257.4L136 257.4L136.1 257.4L136.3 257.4L136.4 257.4L136.6 257.4L136.7 257.4L136.8 257.5L137 257.6L137.1 257.6L137.2 257.7L137.4 257.8L137.5 257.9L137.6 258.1L137.7 258.2L137.8 258.3L137.9 258.5L138 258.6L138.1 258.8L138.2 258.9L138.3 259L138.3 259.2L138.4 259.3L138.5 259.3L138.6 259.4L138.7 259.4L138.9 259.4L139 259.4L139.1 259.3L139.3 259.3L139.4 259.2L139.6 259.1L139.7 259.1L139.9 259L140.1 259L140.2 258.9L140.4 258.9L140.6 258.9L140.7 258.9L140.9 258.9L141 258.9L141.2 258.9L141.3 258.9L141.4 259L141.6 259.1L141.7 259.1L141.8 259.2L141.9 259.3L142 259.4L142.1 259.5L142.3 259.6L142.4 259.6L142.5 259.7L142.5 259.8L142.6 259.9L142.7 260.1L142.8 260.2L142.9 260.3L143 260.4L143.1 260.5L143.2 260.6L143.3 260.7L143.3 260.8L143.4 260.9L143.5 261.1L143.6 261.2L143.6 261.3L143.7 261.4L143.8 261.5L143.8 261.7L143.9 261.8L143.9 261.9L144 262.1L144 262.2L144.1 262.3L144.1 262.5L144.1 262.6L144.2 262.7L144.2 262.9L144.2 263L144.1 263.2L144.1 263.3L144.1 263.5L144 263.6L144 263.8L143.9 263.9L143.8 264.1L143.7 264.2L143.6 264.3L143.4 264.5L143.3 264.6L143.2 264.7L143.1 264.9L143 265L143 265.1L143 265.2z" fill="#d81b74"/><circle cx="136.7" cy="265.300" r="2.700" fill="none" stroke="#28b8a8" stroke-width="1"/><path d="M163.4 265.3L163.5 265.4L163.5 265.5L163.5 265.6L163.6 265.7L163.7 265.9L163.8 266L163.9 266.1L164.1 266.3L164.2 266.4L164.3 266.5L164.4 266.7L164.5 266.8L164.5 267L164.6 267.1L164.6 267.3L164.6 267.4L164.7 267.6L164.7 267.7L164.7 267.9L164.6 268L164.6 268.1L164.6 268.3L164.5 268.4L164.5 268.5L164.4 268.7L164.4 268.8L164.3 268.9L164.3 269.1L164.2 269.2L164.1 269.3L164.1 269.4L164 269.5L163.9 269.7L163.8 269.8L163.8 269.9L163.7 270L163.6 270.1L163.5 270.2L163.4 270.3L163.3 270.4L163.2 270.5L163.1 270.7L163 270.8L163 270.9L162.9 271L162.8 271L162.6 271.1L162.5 271.2L162.4 271.3L162.3 271.4L162.2 271.5L162.1 271.5L161.9 271.6L161.8 271.7L161.7 271.7L161.5 271.7L161.4 271.7L161.2 271.7L161.1 271.7L160.9 271.7L160.7 271.7L160.6 271.6L160.4 271.6L160.2 271.5L160.1 271.5L159.9 271.4L159.8 271.3L159.6 271.3L159.5 271.2L159.4 271.2L159.2 271.2L159.1 271.2L159 271.3L158.9 271.3L158.8 271.4L158.8 271.6L158.7 271.7L158.6 271.8L158.5 272L158.4 272.1L158.3 272.3L158.2 272.4L158.1 272.5L158 272.7L157.9 272.8L157.7 272.9L157.6 273L157.5 273L157.3 273.1L157.2 273.2L157.1 273.2L156.9 273.2L156.8 273.2L156.6 273.2L156.5 273.2L156.4 273.2L156.2 273.2L156.1 273.2L155.9 273.2L155.8 273.2L155.7 273.2L155.5 273.1L155.4 273.1L155.3 273.1L155.1 273L155 273L154.9 273L154.7 272.9L154.6 272.9L154.5 272.8L154.3 272.8L154.2 272.7L154.1 272.7L153.9 272.6L153.8 272.5L153.7 272.5L153.6 272.4L153.4 272.4L153.3 272.3L153.2 272.2L153.1 272.1L153 272L152.9 272L152.8 271.9L152.7 271.8L152.6 271.7L152.5 271.5L152.4 271.4L152.4 271.3L152.3 271.1L152.3 271L152.2 270.8L152.2 270.6L152.2 270.5L152.2 270.3L152.2 270.1L152.2 269.9L152.2 269.8L152.3 269.6L152.3 269.4L152.3 269.3L152.2 269.2L152.2 269.1L152.2 269L152.1 268.9L152 268.8L151.9 268.8L151.7 268.7L151.6 268.7L151.4 268.6L151.3 268.6L151.1 268.5L150.9 268.5L150.7 268.4L150.6 268.4L150.4 268.3L150.3 268.2L150.1 268.1L150 268.1L149.9 268L149.8 267.8L149.7 267.7L149.7 267.6L149.6 267.5L149.5 267.4L149.5 267.2L149.4 267.1L149.4 267L149.4 266.8L149.3 266.7L149.3 266.6L149.3 266.4L149.3 266.3L149.2 266.1L149.2 266L149.2 265.9L149.2 265.7L149.2 265.6L149.2 265.4L149.2 265.3L149.2 265.2L149.2 265L149.2 264.9L149.2 264.7L149.2 264.6L149.2 264.5L149.3 264.3L149.3 264.2L149.3 264L149.3 263.9L149.4 263.8L149.4 263.6L149.4 263.5L149.5 263.4L149.5 263.2L149.6 263.1L149.7 263L149.7 262.9L149.8 262.8L149.9 262.6L150 262.5L150.1 262.5L150.3 262.4L150.4 262.3L150.6 262.2L150.7 262.2L150.9 262.1L151.1 262.1L151.3 262L151.4 262L151.6 261.9L151.7 261.9L151.9 261.8L152 261.8L152.1 261.7L152.2 261.6L152.2 261.5L152.2 261.4L152.3 261.3L152.3 261.2L152.3 261L152.2 260.8L152.2 260.7L152.2 260.5L152.2 260.3L152.2 260.1L152.2 260L152.2 259.8L152.3 259.6L152.3 259.5L152.4 259.3L152.4 259.2L152.5 259.1L152.6 258.9L152.7 258.8L152.8 258.7L152.9 258.6L153 258.6L153.1 258.5L153.2 258.4L153.3 258.3L153.4 258.2L153.6 258.2L153.7 258.1L153.8 258.1L153.9 258L154.1 257.9L154.2 257.9L154.3 257.8L154.5 257.8L154.6 257.7L154.7 257.7L154.9 257.6L155 257.6L155.1 257.6L155.3 257.5L155.4 257.5L155.5 257.5L155.7 257.4L155.8 257.4L155.9 257.4L156.1 257.4L156.2 257.4L156.4 257.4L156.5 257.4L156.6 257.4L156.8 257.4L156.9 257.4L157.1 257.4L157.2 257.4L157.3 257.5L157.5 257.6L157.6 257.6L157.7 257.7L157.9 257.8L158 257.9L158.1 258.1L158.2 258.2L158.3 258.3L158.4 258.5L158.5 258.6L158.6 258.8L158.7 258.9L158.8 259L158.8 259.2L158.9 259.3L159 259.3L159.1 259.4L159.2 259.4L159.4 259.4L159.5 259.4L159.6 259.3L159.8 259.3L159.9 259.2L160.1 259.1L160.2 259.1L160.4 259L160.6 259L160.7 258.9L160.9 258.9L161.1 258.9L161.2 258.9L161.4 258.9L161.5 258.9L161.7 258.9L161.8 258.9L161.9 259L162.1 259.1L162.2 259.1L162.3 259.2L162.4 259.3L162.5 259.4L162.6 259.5L162.8 259.6L162.9 259.6L163 259.7L163 259.8L163.1 259.9L163.2 260.1L163.3 260.2L163.4 260.3L163.5 260.4L163.6 260.5L163.7 260.6L163.8 260.7L163.8 260.8L163.9 260.9L164 261.1L164.1 261.2L164.1 261.3L164.2 261.4L164.3 261.5L164.3 261.7L164.4 261.8L164.4 261.9L164.5 262.1L164.5 262.2L164.6 262.3L164.6 262.5L164.6 262.6L164.7 262.7L164.7 262.9L164.7 263L164.6 263.2L164.6 263.3L164.6 263.5L164.5 263.6L164.5 263.8L164.4 263.9L164.3 264.1L164.2 264.2L164.1 264.3L163.9 264.5L163.8 264.6L163.7 264.7L163.6 264.9L163.5 265L163.5 265.1L163.5 265.2z" fill="#d81b74"/><circle cx="157.2" cy="265.300" r="2.700" fill="none" stroke="#28b8a8" stroke-width="1"/><g fill="none" stroke="#28b8a8" stroke-width=".800"><path d="M128 262c0-7 8-10 11-5M166 262c0-7-8-10-11-5M143.500 274.500l3.500-5 3.500 5c-1 2.500-6 2.500-7 0z"/></g><path d="M145.500 259c0-2 1.500-4 1.500-4s1.500 2 1.500 4-3 2-3 0z" fill="none" stroke="#ffee9a" stroke-width=".700"/><path d="M135 281.500h24" stroke="#eb9e06" stroke-width="1.600"/><g fill="none" stroke="#c86414" stroke-width="1"><path d="M137 291v-5a2 2 0 0 1 4 0v5M142.500 291v-5a2 2 0 0 1 4 0v5M148 291v-5a2 2 0 0 1 4 0v5M153.500 291v-5a2 2 0 0 1 4 0v5"/></g><g font-family="'DejaVu Sans','Liberation Sans',sans-serif" font-weight="bold" fill="#3a0540" font-size="8.300"><text x="101.200" y="221" textLength="92.100" lengthAdjust="spacingAndGlyphs">Infographics make your</text><text x="111.900" y="231.700" textLength="70.900" lengthAdjust="spacingAndGlyphs">idea understable...</text></g><g font-family="'DejaVu Sans','Liberation Sans',sans-serif" font-weight="bold" fill="#ffee9a"><text x="105" y="247.400" font-size="6.800" textLength="9" lengthAdjust="spacingAndGlyphs">01</text><text x="181.300" y="247.400" font-size="6.800" textLength="10.300" lengthAdjust="spacingAndGlyphs">02</text><text x="104.100" y="278.200" font-size="6.800" textLength="9.900" lengthAdjust="spacingAndGlyphs">03</text><text x="181.300" y="278.200" font-size="6.800" textLength="10.500" lengthAdjust="spacingAndGlyphs">04</text><text x="101" y="254" font-size="3.600" textLength="13" lengthAdjust="spacingAndGlyphs">Venus</text><text x="181.300" y="254" font-size="3.600" textLength="14.600" lengthAdjust="spacingAndGlyphs">Saturn</text><text x="95" y="284.800" font-size="3.600" textLength="19" lengthAdjust="spacingAndGlyphs">Neptune</text><text x="181.300" y="284.800" font-size="3.600" textLength="15.400" lengthAdjust="spacingAndGlyphs">Jupiter</text></g><g font-family="'Liberation Sans',sans-serif" fill="#1f6f6c" font-size="3.100"><text x="77.500" y="260" textLength="36.500" lengthAdjust="spacingAndGlyphs">Venus has a beautiful</text><text x="71" y="264.800" textLength="43" lengthAdjust="spacingAndGlyphs">name, but it’s terribly hot</text><text x="181.300" y="260" textLength="40.300" lengthAdjust="spacingAndGlyphs">Saturn is the ringed one</text><text x="181.300" y="264.800" textLength="25" lengthAdjust="spacingAndGlyphs">and a gas giant</text><text x="75.300" y="290" textLength="38.700" lengthAdjust="spacingAndGlyphs">Neptune is the farthest</text><text x="80.100" y="294.800" textLength="33.900" lengthAdjust="spacingAndGlyphs">planet from the Sun</text><text x="181.300" y="290" textLength="46" lengthAdjust="spacingAndGlyphs">It’s the biggest planet in the</text><text x="181.300" y="294.800" textLength="21.200" lengthAdjust="spacingAndGlyphs">Solar System</text></g></g>
<rect x="53.8" y="340.8" width="187.5" height="105.5" fill="#3a0540"/><g clip-path="url(#tc1)"><use href="#deco" transform="translate(53.8 340.8) scale(0.15625) translate(-500 -198)"/></g><g font-family="'DejaVu Sans','Liberation Sans',sans-serif" font-weight="bold" font-size="8.200" fill="#ff9e0c"><text x="118.200" y="358.6" textLength="58.800" lengthAdjust="spacingAndGlyphs">...And the same</text><text x="119.600" y="369.6" textLength="56.300" lengthAdjust="spacingAndGlyphs">goes for tables</text></g><g fill="none" stroke="#c4601a" stroke-width=".700"><path d="M109.400 383.4H224.900V417H70.200V392.6H224.900M70.200 400.6H224.900M70.200 408.7H224.900M109.400 383.4V417M147.700 383.4V417M185.400 383.4V417"/></g><g font-family="'DejaVu Sans','Liberation Sans',sans-serif"><text x="124" y="389" font-size="3.3" font-weight="bold" fill="#ff1a6e" textLength="9" lengthAdjust="spacingAndGlyphs">Mass</text><text x="159.7" y="389" font-size="3.3" font-weight="bold" fill="#ff1a6e" textLength="14.3" lengthAdjust="spacingAndGlyphs">Diameter</text><text x="193" y="389" font-size="3.3" font-weight="bold" fill="#ff1a6e" textLength="24.6" lengthAdjust="spacingAndGlyphs">Surface gravity</text><text x="83.4" y="398" font-size="3.3" font-weight="bold" fill="#ff9e0c" textLength="13.1" lengthAdjust="spacingAndGlyphs">Mercury</text><text x="124.7" y="397.2" font-size="3.1" font-weight="normal" fill="#fff" textLength="7.7" lengthAdjust="spacingAndGlyphs">0.06</text><text x="163" y="397.2" font-size="3.1" font-weight="normal" fill="#fff" textLength="7.7" lengthAdjust="spacingAndGlyphs">0.38</text><text x="201.5" y="397.2" font-size="3.1" font-weight="normal" fill="#fff" textLength="7.7" lengthAdjust="spacingAndGlyphs">0.38</text><text x="85.5" y="406" font-size="3.3" font-weight="bold" fill="#ff9e0c" textLength="8.8" lengthAdjust="spacingAndGlyphs">Mars</text><text x="124.7" y="405.2" font-size="3.1" font-weight="normal" fill="#fff" textLength="7.7" lengthAdjust="spacingAndGlyphs">0.11</text><text x="163" y="405.2" font-size="3.1" font-weight="normal" fill="#fff" textLength="7.7" lengthAdjust="spacingAndGlyphs">0.53</text><text x="201.5" y="405.2" font-size="3.1" font-weight="normal" fill="#fff" textLength="7.7" lengthAdjust="spacingAndGlyphs">0.38</text><text x="84.4" y="414" font-size="3.3" font-weight="bold" fill="#ff9e0c" textLength="11" lengthAdjust="spacingAndGlyphs">Saturn</text><text x="124.7" y="413.2" font-size="3.1" font-weight="normal" fill="#fff" textLength="7.7" lengthAdjust="spacingAndGlyphs">95.2</text><text x="163" y="413.2" font-size="3.1" font-weight="normal" fill="#fff" textLength="7.7" lengthAdjust="spacingAndGlyphs">9.40</text><text x="201.5" y="413.2" font-size="3.1" font-weight="normal" fill="#fff" textLength="7.7" lengthAdjust="spacingAndGlyphs">1.16</text></g>
<rect x="53.8" y="478.8" width="187.5" height="105.5" fill="#ffa00a"/><g clip-path="url(#tc2)"><g fill="#ffee9a"><path d="M65.500 519.500l2.500-2.500 5 .500 4 2 5-.500 2 3.500 3 1.500-.500 4 3 2 1.500 3.500-3 3-4.500 1-1.500 4 3 3.500-2 1-4-3.500-3.500-5.500-3.500-4-2-5.500-3-3-1-4.500z"/><path d="M91.500 514.500l4-2 5.500 .500 1.500 2.500-2 4.500-3.500 4.500-3.500 1.500-1-4.500z"/><path d="M81 545.500l5-1.500 5 2 4.500 3.500-.500 4-3 4.500-2.500 5-2.500 4.500-2-1-1-7-2.500-5.500-1.500-4.500z"/><path d="M103 532.500l2.500-4.500 3-4 2-3.500 3 1.500 1 3.500 4-3.500 4-3.500 6-2 7-.500 6 1 5 2.500 .500 3.500-2 3-1.500 4-3 4.500-1.500 4.500-4.500 3.500-3.500 1.500-2.500-4-3.500-.500-2.500 3.500-2.500-4-4.500-1.500-4.500-1-3.500 1.500-3-2z"/><path d="M99.500 540.500l4.500-2.500 6 .500 5.500 1.500 4 2.500-1.500 4-3 4-2 5-3.500 2.500-2-4.500-1.500-6-3.500-2.500-3-2z"/><path d="M136.500 552.500l4.500-2 4.500 1.500 1.500 4-2.500 4-3-1.500-4-1.500z"/><path d="M132 545l2.500 1 1.500 3-2 .500zM136.500 547l3 .500-1 2z"/></g><ellipse cx="71.7" cy="529.4" rx="3" ry="2.9" fill="#ff1a6e"/><ellipse cx="77.5" cy="539.4" rx="1.6" ry="1.5" fill="#3a0540"/><ellipse cx="90.7" cy="547.7" rx="1.6" ry="1.5" fill="#10b0a0"/><ellipse cx="106.5" cy="527.2" rx="1.6" ry="1.5" fill="#3a0540"/><ellipse cx="105.6" cy="532.8" rx="1.4" ry="1.3" fill="#10b0a0"/><ellipse cx="105.6" cy="537.2" rx="1.6" ry="1.5" fill="#ff1a6e"/><ellipse cx="127.5" cy="541.4" rx="1.7" ry="1.6" fill="#3a0540"/><ellipse cx="137.9" cy="536.3" rx="3" ry="2.9" fill="#10b0a0"/><ellipse cx="137.5" cy="555.5" rx="1.5" ry="1.4" fill="#ff1a6e"/><ellipse cx="162.8" cy="518.9" rx="4.3" ry="4.1" fill="#ff1a6e"/><ellipse cx="162.8" cy="536.7" rx="4.3" ry="4.1" fill="#10b0a0"/><ellipse cx="162.8" cy="554.6" rx="4.3" ry="4.1" fill="#3a0540"/><text x="123.600" y="497" font-family="'DejaVu Sans','Liberation Sans',sans-serif" font-weight="bold" font-size="8.300" fill="#3a0540" textLength="48.200" lengthAdjust="spacingAndGlyphs">This is a map</text><g font-family="'Liberation Sans',sans-serif" fill="#ffee9a" font-size="3.100"><text x="171.800" y="516.500" textLength="35.900" lengthAdjust="spacingAndGlyphs">Venus has a beautiful</text><text x="171.800" y="521.600" textLength="42" lengthAdjust="spacingAndGlyphs">name, but it’s terribly hot</text><text x="171.800" y="534.700" textLength="46.800" lengthAdjust="spacingAndGlyphs">Despite being red, Mars is a</text><text x="171.800" y="539.600" textLength="16.800" lengthAdjust="spacingAndGlyphs">cold place</text><text x="171.800" y="552.700" textLength="35.900" lengthAdjust="spacingAndGlyphs">Mercury is the closest</text><text x="171.800" y="557.500" textLength="29.200" lengthAdjust="spacingAndGlyphs">planet to the Sun</text></g><g fill="none" stroke="#3a0540" stroke-width="1" stroke-linecap="round"><path d="M208 479c1 4 4 6 8 6M212 489c2-2 5-2 6 0M230 515c2-3 6-4 9-2M234 522c1-3 4-4 7-3M236 508c2-1 4 0 5 2"/><circle cx="236.500" cy="520.500" r="2.300"/><circle cx="213" cy="481.500" r="1.800"/></g><g transform="translate(.900 -1.100) rotate(33 226 494.500)"><path d="M213 488a13 12.500 0 0 1 26 0v9c0 4-2 6-4 7v9h-18v-9c-2-1-4-3-4-7z" fill="#ffee9a"/><path d="M218 507v6M221.500 507v6M225 507v6M228.500 507v6M232 507v6" stroke="#e8c860" stroke-width=".800"/><circle cx="219.500" cy="494.500" r="4.400" fill="#d81b74"/><circle cx="232.500" cy="494.500" r="4.400" fill="#d81b74"/><circle cx="219.500" cy="494.500" r="1.900" fill="#10b0a0"/><circle cx="232.500" cy="494.500" r="1.900" fill="#10b0a0"/><circle cx="219.500" cy="494.500" r=".900" fill="#3a0540"/><circle cx="232.500" cy="494.500" r=".900" fill="#3a0540"/><path d="M226 499l-2 3.500h4z" fill="#3a0540"/><path d="M217 484a10 9 0 0 1 18 0" fill="none" stroke="#b8b8c8" stroke-width="1"/></g><g fill="none" stroke="#3a0540" stroke-width="1.200" stroke-linecap="round"><path d="M54 562c5 2 9 7 10 13M66 584c0-5 3-9 7-9s6 4 4 7M60 556c3 2 5 5 6 9"/></g><g fill="#3a0540"><path d="M56 557Q58.7 558.3 60.9 560.1A1.7 1.7 0 1 1 58.5 562.2Q57 559.9 56 557z"/><path d="M62 561Q64.4 563 66.2 565.3A1.7 1.7 0 1 1 63.3 566.9Q62.3 564.1 62 561z"/><path d="M67 566Q69.2 568 70.8 570.4A1.7 1.7 0 1 1 67.8 571.7Q67.1 569 67 566z"/><path d="M56 565Q58.4 566.1 60.3 567.6A1.6 1.6 0 1 1 58 569.6Q56.8 567.5 56 565z"/><path d="M61 570Q63.2 571.2 64.9 572.8A1.5 1.5 0 1 1 62.6 574.5Q61.6 572.4 61 570z"/><circle cx="74.500" cy="571" r="1.400"/><path d="M70 577Q72.9 577.4 75.4 578.5A1.6 1.6 0 1 1 73.8 581.1Q71.7 579.3 70 577z"/></g><path d="M69.4 578L69.5 578.1L69.5 578.3L69.5 578.4L69.5 578.6L69.4 578.7L69.4 578.9L69.4 579L69.4 579.2L69.4 579.3L69.4 579.5L69.3 579.6L69.3 579.7L69.2 579.9L69.1 580L69 580.1L68.9 580.2L68.7 580.3L68.6 580.4L68.5 580.6L68.5 580.7L68.5 580.8L68.5 581L68.5 581.1L68.5 581.3L68.4 581.4L68.4 581.6L68.3 581.7L68.2 581.8L68.1 581.9L68 582L67.9 582.1L67.8 582.2L67.7 582.3L67.5 582.3L67.4 582.4L67.3 582.5L67.2 582.6L67 582.6L66.8 582.7L66.7 582.7L66.5 582.7L66.4 582.8L66.3 582.9L66.3 583L66.2 583.1L66.2 583.3L66.2 583.5L66.2 583.6L66.1 583.8L66.1 583.9L66 584.1L65.9 584.2L65.9 584.3L65.8 584.4L65.7 584.6L65.6 584.7L65.6 584.9L65.5 585L65.4 585.2L65.3 585.3L65.2 585.5L65.1 585.5L65 585.6L64.8 585.6L64.6 585.6L64.5 585.6L64.3 585.6L64.2 585.6L64 585.6L63.9 585.6L63.7 585.7L63.6 585.7L63.5 585.8L63.3 585.8L63.2 585.8L63 585.7L62.9 585.7L62.7 585.7L62.6 585.8L62.5 585.8L62.4 585.9L62.2 586L62.1 586.2L62 586.3L61.8 586.4L61.7 586.4L61.5 586.4L61.4 586.4L61.2 586.4L61.1 586.4L61 586.3L60.8 586.3L60.7 586.3L60.5 586.3L60.4 586.2L60.2 586.2L60.1 586.1L60 586L59.9 585.8L59.8 585.7L59.6 585.5L59.5 585.3L59.4 585.1L59.3 585L59.2 584.9L59.1 584.9L59 584.9L58.9 584.8L58.7 584.8L58.6 584.8L58.5 584.8L58.3 584.8L58.2 584.8L58.1 584.8L57.9 584.9L57.7 584.9L57.6 585L57.4 585L57.2 585.1L57 585.1L56.9 585.1L56.7 585L56.6 584.9L56.5 584.8L56.5 584.6L56.4 584.5L56.3 584.3L56.2 584.2L56.1 584.1L56 584.1L55.9 584L55.7 584L55.6 583.9L55.5 583.8L55.4 583.7L55.3 583.6L55.2 583.5L55.1 583.4L55 583.3L54.8 583.3L54.7 583.2L54.5 583.1L54.4 583.1L54.2 583L54.1 582.9L54 582.8L54 582.6L53.9 582.5L53.9 582.3L53.9 582.1L53.9 582L53.9 581.8L53.9 581.7L53.8 581.5L53.8 581.4L53.7 581.3L53.7 581.2L53.6 581L53.6 580.9L53.6 580.7L53.6 580.6L53.6 580.4L53.5 580.3L53.5 580.2L53.4 580.1L53.3 580L53.2 579.8L53.1 579.7L53 579.6L53 579.4L53.1 579.3L53.2 579.1L53.3 579L53.4 578.8L53.5 578.7L53.6 578.5L53.7 578.4L53.8 578.3L53.8 578.1L53.8 578L53.8 577.9L53.9 577.7L53.9 577.6L53.9 577.5L53.9 577.4L53.9 577.2L53.8 577.1L53.7 577L53.7 576.8L53.5 576.7L53.4 576.5L53.3 576.3L53.2 576.2L53.1 576L53.1 575.9L53.1 575.7L53.1 575.6L53.2 575.4L53.2 575.3L53.3 575.1L53.3 575L53.3 574.9L53.3 574.7L53.4 574.6L53.5 574.4L53.6 574.3L53.7 574.2L53.8 574.1L54 574.1L54.2 574L54.3 573.9L54.4 573.8L54.5 573.7L54.5 573.6L54.6 573.4L54.6 573.3L54.6 573.1L54.7 573L54.8 572.9L54.9 572.8L54.9 572.6L55 572.5L55.1 572.4L55.2 572.3L55.2 572.1L55.3 572L55.3 571.8L55.4 571.7L55.5 571.6L55.6 571.5L55.8 571.4L55.9 571.4L56.1 571.4L56.3 571.3L56.4 571.3L56.6 571.3L56.7 571.3L56.9 571.2L57 571.1L57.1 571L57.2 571L57.3 570.9L57.5 570.9L57.6 570.8L57.7 570.8L57.9 570.8L58 570.8L58.2 570.7L58.3 570.6L58.4 570.6L58.5 570.5L58.7 570.5L58.8 570.4L58.9 570.5L59.1 570.5L59.2 570.6L59.4 570.7L59.6 570.7L59.7 570.8L59.8 570.8L60 570.8L60.1 570.8L60.2 570.7L60.3 570.7L60.5 570.6L60.6 570.5L60.7 570.5L60.8 570.4L61 570.4L61.1 570.4L61.2 570.4L61.4 570.3L61.5 570.2L61.7 570.1L61.8 570L62 569.9L62.1 569.8L62.3 569.7L62.4 569.7L62.6 569.7L62.7 569.8L62.8 569.8L63 569.9L63.1 569.9L63.3 569.9L63.4 570L63.6 570L63.7 570L63.8 570.1L64 570.2L64.1 570.3L64.2 570.4L64.3 570.6L64.3 570.7L64.4 570.8L64.6 570.9L64.7 571L64.8 571L65 571L65.1 571L65.3 571.1L65.4 571.1L65.6 571.1L65.7 571.2L65.8 571.3L65.9 571.3L66.1 571.4L66.2 571.5L66.3 571.5L66.5 571.6L66.6 571.6L66.8 571.7L66.9 571.8L67 571.9L67 572.1L67.1 572.2L67.1 572.4L67 572.6L67 572.8L67 573L67 573.2L67 573.4L67 573.5L67.1 573.7L67.1 573.8L67.1 573.9L67.1 574.1L67.1 574.2L67.2 574.3L67.2 574.5L67.3 574.6L67.4 574.6L67.6 574.7L67.8 574.7L68 574.8L68.2 574.8L68.4 574.9L68.6 575L68.7 575.1L68.8 575.2L68.9 575.3L68.9 575.5L68.9 575.6L68.9 575.8L68.9 575.9L69 576L69 576.2L69 576.3L69.1 576.5L69.1 576.6L69.1 576.7L69 576.9L69 577L69 577.2L69 577.3L69 577.4L69 577.6L69.1 577.7L69.2 577.9z" fill="#d81b74"/><path d="M66.2 578L66.3 578.1L66.3 578.2L66.3 578.3L66.3 578.4L66.3 578.5L66.3 578.5L66.3 578.6L66.3 578.7L66.2 578.8L66.2 578.9L66.2 579L66.2 579.1L66.2 579.2L66.2 579.3L66.2 579.4L66.1 579.4L66.1 579.5L66.1 579.6L66 579.7L65.9 579.7L65.8 579.8L65.7 579.9L65.6 579.9L65.5 580L65.4 580L65.3 580L65.2 580.1L65.2 580.2L65.1 580.2L65.1 580.3L65.1 580.4L65.1 580.5L65.1 580.6L65.1 580.7L65.1 580.8L65.1 580.9L65.1 581L65 581.1L65 581.2L65 581.2L64.9 581.3L64.8 581.4L64.8 581.4L64.7 581.5L64.7 581.6L64.7 581.7L64.6 581.8L64.6 581.9L64.6 582L64.5 582.1L64.5 582.2L64.4 582.2L64.3 582.3L64.3 582.3L64.2 582.4L64 582.4L63.9 582.3L63.8 582.3L63.7 582.3L63.6 582.3L63.5 582.2L63.3 582.2L63.3 582.2L63.2 582.2L63.1 582.3L63 582.3L63 582.4L62.9 582.4L62.8 582.5L62.7 582.5L62.7 582.6L62.6 582.6L62.5 582.6L62.4 582.6L62.3 582.6L62.3 582.7L62.2 582.7L62.1 582.7L62 582.7L61.9 582.8L61.9 582.9L61.8 583L61.7 583L61.6 583.1L61.6 583.2L61.5 583.3L61.4 583.4L61.3 583.4L61.2 583.4L61.1 583.4L61 583.4L60.9 583.3L60.8 583.3L60.7 583.2L60.7 583.1L60.6 583L60.5 583L60.4 582.9L60.3 582.9L60.2 582.9L60.2 582.8L60.1 582.8L60 582.8L59.9 582.8L59.8 582.7L59.8 582.7L59.7 582.6L59.6 582.6L59.6 582.5L59.5 582.4L59.4 582.4L59.4 582.3L59.3 582.3L59.2 582.2L59.1 582.2L59 582.2L58.9 582.3L58.8 582.3L58.7 582.3L58.6 582.4L58.5 582.4L58.3 582.4L58.2 582.4L58.1 582.4L58.1 582.4L58 582.3L57.9 582.2L57.9 582.2L57.8 582.1L57.8 582L57.7 581.9L57.6 581.8L57.6 581.8L57.5 581.7L57.5 581.6L57.4 581.6L57.3 581.5L57.3 581.5L57.2 581.4L57.2 581.3L57.2 581.2L57.1 581.1L57.2 581L57.2 580.9L57.2 580.7L57.2 580.6L57.2 580.5L57.2 580.4L57.2 580.4L57.1 580.3L57.1 580.2L57 580.2L56.9 580.1L56.8 580.1L56.7 580L56.6 580L56.5 579.9L56.4 579.9L56.4 579.8L56.3 579.7L56.3 579.7L56.2 579.6L56.2 579.5L56.2 579.4L56.2 579.3L56.1 579.2L56.1 579.2L56 579.1L56 579L55.9 578.9L55.9 578.8L55.8 578.7L55.8 578.7L55.8 578.6L55.8 578.5L55.8 578.4L55.9 578.3L55.9 578.2L56 578.1L56.1 578L56.2 577.9L56.3 577.8L56.4 577.8L56.4 577.7L56.4 577.6L56.5 577.5L56.5 577.4L56.5 577.3L56.4 577.3L56.4 577.2L56.4 577.1L56.4 577L56.4 576.9L56.4 576.8L56.4 576.7L56.4 576.7L56.4 576.6L56.5 576.5L56.5 576.4L56.5 576.3L56.5 576.2L56.5 576.1L56.5 576L56.4 575.9L56.4 575.8L56.4 575.7L56.4 575.6L56.4 575.5L56.4 575.4L56.4 575.3L56.5 575.2L56.5 575.1L56.6 575.1L56.7 575.1L56.8 575L57 575L57.1 575L57.2 574.9L57.3 574.9L57.4 574.9L57.4 574.8L57.5 574.8L57.6 574.7L57.6 574.6L57.7 574.6L57.7 574.5L57.8 574.5L57.9 574.4L57.9 574.4L58 574.3L58.1 574.3L58.2 574.3L58.3 574.3L58.4 574.2L58.4 574.2L58.5 574.1L58.5 574L58.6 573.9L58.6 573.8L58.6 573.7L58.6 573.6L58.7 573.5L58.7 573.3L58.8 573.2L58.8 573.2L58.9 573.1L59 573.1L59.1 573L59.2 573L59.3 573L59.4 573.1L59.5 573.1L59.6 573.1L59.7 573.1L59.8 573.1L59.9 573.1L60 573L60 573L60.1 573L60.2 573L60.3 573L60.4 573L60.5 573.1L60.6 573.1L60.7 573.2L60.8 573.2L60.9 573.3L60.9 573.3L61 573.4L61.1 573.4L61.2 573.4L61.3 573.4L61.3 573.4L61.4 573.3L61.5 573.3L61.6 573.2L61.7 573.1L61.8 573L61.9 573L62 573L62.1 572.9L62.2 572.9L62.3 572.9L62.4 573L62.4 573L62.5 573L62.6 573.1L62.7 573.1L62.8 573.1L62.9 573.1L63 573.1L63.1 573.1L63.2 573.1L63.3 573.2L63.3 573.2L63.4 573.3L63.5 573.3L63.5 573.4L63.6 573.5L63.6 573.6L63.7 573.7L63.7 573.9L63.7 574L63.7 574.1L63.8 574.2L63.8 574.2L63.9 574.3L63.9 574.4L64 574.4L64.1 574.4L64.2 574.4L64.3 574.4L64.4 574.5L64.5 574.5L64.6 574.5L64.6 574.6L64.7 574.6L64.8 574.7L64.8 574.8L64.9 574.8L65 574.9L65 574.9L65.1 575L65.2 575L65.3 575.1L65.4 575.1L65.5 575.1L65.6 575.2L65.7 575.2L65.8 575.3L65.8 575.4L65.9 575.5L65.9 575.6L65.9 575.7L65.9 575.8L65.8 575.9L65.8 576L65.8 576.1L65.7 576.2L65.7 576.3L65.7 576.4L65.7 576.5L65.7 576.6L65.7 576.7L65.7 576.8L65.8 576.8L65.8 576.9L65.8 577L65.8 577.1L65.8 577.2L65.8 577.2L65.8 577.3L65.8 577.4L65.8 577.5L65.8 577.6L65.8 577.7L65.8 577.8L65.9 577.8L65.9 577.9z" fill="#a4125c"/><circle cx="61.100" cy="578" r="2.300" fill="#3a0540"/></g>
<rect x="49" y="611.9" width="197" height="115.3" fill="#b7472a"/><rect x="52.800" y="615.8" width="189.5" height="107.5" fill="#fff"/>
<rect x="53.8" y="616.8" width="187.5" height="105.5" fill="#3a0540"/><g clip-path="url(#tc3)"><use href="#deco" transform="translate(53.8 616.8) scale(0.15625) translate(-500 -198)"/></g><g font-family="'DejaVu Sans','Liberation Sans',sans-serif" font-weight="bold" font-size="8.200" fill="#ff9e0c"><text x="118.200" y="634.6" textLength="58.800" lengthAdjust="spacingAndGlyphs">...And the same</text><text x="119.600" y="645.6" textLength="56.300" lengthAdjust="spacingAndGlyphs">goes for tables</text></g>
<rect x="53.8" y="754.8" width="187.5" height="105.5" fill="#02bba4"/><g clip-path="url(#tc4)"><g fill="none" stroke="#ff1a6e" stroke-width="1.800" stroke-linecap="round"><path d="M68 815c-4-2-6-6-5-10M84 779c-8-1-15 3-18 9M97 778c3-3 8-3 11 0M120 835c3-2 6-5 7-9M92 765c4-4 12-6 18-4s9 7 8 12M103 770c2-2 6-2 8 0M64 790c0-8 6-14 14-15M70 800c-2-4-1-8 2-10M127 784c2-3 6-4 8-2s1 6-2 7M92 838c3-4 10-6 17-6s14-3 17-6M101 847c-1-4 1-8 5-9s8 2 7 6-5 5-7 3M117 832c3-1 6-3 8-6"/></g><g fill="#ff1a6e"><path d="M89 761Q88.9 759.1 89.2 757.4A1.3 1.3 0 1 1 91.4 758.4Q90.4 759.8 89 761z"/><path d="M94 760Q94.2 758 94.7 756.3A1.3 1.3 0 1 1 96.9 757.5Q95.6 758.9 94 760z"/><path d="M85 772Q85.6 770 86.6 768.4A1.5 1.5 0 1 1 88.6 770.4Q87 771.4 85 772z"/><path d="M90 772Q90.6 769.8 91.7 768A1.4 1.4 0 1 1 93.7 769.7Q92.1 771 90 772z"/><path d="M58 806Q59.5 804.6 61 803.7A1.6 1.6 0 1 1 61.8 806.6Q59.9 806.5 58 806z"/><path d="M59 812Q60.3 810.2 61.8 808.9A1.6 1.6 0 1 1 63.2 811.6Q61.2 812 59 812z"/><path d="M64 816Q64.9 813.9 66.1 812.2A1.6 1.6 0 1 1 68.1 814.5Q66.2 815.5 64 816z"/><path d="M58 800Q59.8 799.6 61.4 799.7A1.3 1.3 0 1 1 60.7 802Q59.3 801.2 58 800z"/><path d="M126 777Q127.1 778.6 127.7 780.4A1.4 1.4 0 1 1 125.1 780.7Q125.3 778.9 126 777z"/><path d="M131 813Q131.7 814.9 131.9 816.7A1.4 1.4 0 1 1 129.3 816.4Q129.9 814.6 131 813z"/><path d="M137 821Q135.3 819 134.2 816.8A1.5 1.5 0 1 1 137 816Q137.3 818.4 137 821z"/><path d="M92 845Q93.3 843 94.8 841.5A1.5 1.5 0 1 1 96.3 844Q94.3 844.7 92 845z"/><path d="M99 851Q97.9 849.3 97.3 847.6A1.3 1.3 0 1 1 99.8 847.3Q99.6 849.1 99 851z"/><path d="M92 853Q93.8 852.1 95.5 851.7A1.4 1.4 0 1 1 95.5 854.3Q93.8 853.9 92 853z"/><path d="M100 858Q100.3 855.9 101.1 854.1A1.5 1.5 0 1 1 103.3 855.7Q101.9 857 100 858z"/><path d="M106 860Q105.6 858 105.6 856.1A1.4 1.4 0 1 1 108.2 856.8Q107.3 858.5 106 860z"/><path d="M111 857Q110.4 855.1 110.3 853.2A1.2 1.2 0 1 1 112.6 853.5Q112 855.3 111 857z"/><circle cx="101" cy="758.500" r="1.300"/><circle cx="110.500" cy="774" r="1.600"/><circle cx="131.500" cy="794" r="1"/><circle cx="108" cy="844" r="1.300"/><circle cx="116.500" cy="839.500" r="1.500"/><circle cx="121.500" cy="836.500" r="1"/><circle cx="60.500" cy="795" r="1.600"/><circle cx="67" cy="807" r="1.500"/><rect x="71.500" y="789" width="9" height="32" rx="2.500"/></g><ellipse cx="103.300" cy="805.300" rx="26.400" ry="30" fill="#ffe270"/><ellipse cx="105.800" cy="805.300" rx="23.800" ry="29.500" fill="#f0dc0a"/><path d="M85 800c0-12 8-19 18-19s18 7 18 19c0 8-3 13-5 19-1 5-4 10-13 11-9-1-12-6-13-11-2-6-5-11-5-19z" fill="#e8d208"/><path d="M88 811c2 6 3 13 8 17M118 811c-2 6-3 13-8 17" fill="none" stroke="#8a7420" stroke-width="2"/><path d="M86.500 789c-1.500 5-1.500 12 1 17l2-1c-1.500-5-1.500-11-.500-15zM120 791c1.500 4 1.500 9-.500 13l-2-1c1-4 1-8 .500-11z" fill="#6a5a30"/><path d="M96 828c3 2.500 11 2.500 14 0" fill="none" stroke="#b09a20" stroke-width="1.500"/><ellipse cx="94.300" cy="802.600" rx="3.400" ry="2.900" fill="#3a0540"/><ellipse cx="109" cy="803.200" rx="3.200" ry="2.900" fill="#3a0540"/><path d="M101.500 806.500l-1.800 3.500h3.600z" fill="#3a0540"/><rect x="96.500" y="819.300" width="9" height="5.200" rx="1" fill="#fff"/><path d="M96.500 822h9M99.500 819.500v5M102.500 819.500v5" stroke="#6a5a3a" stroke-width=".500"/><path d="M89 801c1.500-3 8-4 11-1M104.500 800.500c2-3 8-3 10 0" fill="none" stroke="#3aa8a0" stroke-width=".800" stroke-dasharray="1 .600"/><g font-family="'DejaVu Sans','Liberation Sans',sans-serif" font-weight="bold" font-size="8.600" fill="#3a0540"><text x="161.300" y="790.500" textLength="63.900" lengthAdjust="spacingAndGlyphs">A picture always</text><text x="161.300" y="801.300" textLength="52.900" lengthAdjust="spacingAndGlyphs">reinforces the</text><text x="161.300" y="812.200" textLength="29.500" lengthAdjust="spacingAndGlyphs">concept</text></g><g font-family="'Liberation Sans',sans-serif" fill="#c6f1ea" font-size="2.900"><text x="161.300" y="820" textLength="49.300" lengthAdjust="spacingAndGlyphs">Images reveal large amounts of</text><text x="161.300" y="824" textLength="52.500" lengthAdjust="spacingAndGlyphs">data, so remember: use an image</text><text x="161.300" y="827.900" textLength="31.700" lengthAdjust="spacingAndGlyphs">instead of long texts</text></g></g>
<rect x="53.8" y="202.8" width="187.5" height="105.5" fill="none" stroke="#c9ccd0" stroke-width=".600"/>
<rect x="53.8" y="340.8" width="187.5" height="105.5" fill="none" stroke="#c9ccd0" stroke-width=".600"/>
<rect x="53.8" y="478.8" width="187.5" height="105.5" fill="none" stroke="#c9ccd0" stroke-width=".600"/>
<rect x="53.8" y="754.8" width="187.5" height="105.5" fill="none" stroke="#c9ccd0" stroke-width=".600"/>
</svg>
<svg class="a" style="left:0;top:0" width="1869" height="889" viewBox="0 0 1869 889">
<defs>
<clipPath id="cv"><rect x="304" y="182" width="1565" height="701"/></clipPath>
<g id="deco">
<path d="M412 188.2a8 8 0 1 0 16 0a8 8 0 1 0 -16 0zM439 205.5a7 7 0 1 0 14 0a7 7 0 1 0 -14 0zM463.9 226.8a6.2 6.2 0 1 0 12.4 0a6.2 6.2 0 1 0 -12.4 0zM485.4 251.2a4.7 4.7 0 1 0 9.4 0a4.7 4.7 0 1 0 -9.4 0zM497.7 276.1a3.6 3.6 0 1 0 7.2 0a3.6 3.6 0 1 0 -7.2 0zM506.2 297.4a2.5 2.5 0 1 0 5 0a2.5 2.5 0 1 0 -5 0zM517 244.2a6.7 6.7 0 1 0 13.4 0a6.7 6.7 0 1 0 -13.4 0zM524.2 265.6a4.7 4.7 0 1 0 9.4 0a4.7 4.7 0 1 0 -9.4 0zM528.8 283.1a2.9 2.9 0 1 0 5.8 0a2.9 2.9 0 1 0 -5.8 0zM536.9 416.4a12.3 12.3 0 1 0 24.6 0a12.3 12.3 0 1 0 -24.6 0zM615.2 272a11.7 11.7 0 1 0 23.4 0a11.7 11.7 0 1 0 -23.4 0zM648.8 263a8.1 8.1 0 1 0 16.2 0a8.1 8.1 0 1 0 -16.2 0zM677 258a5.2 5.2 0 1 0 10.4 0a5.2 5.2 0 1 0 -10.4 0zM438.6 181.9C450 189 461 196 470.9 203.6C481 214 489 227 494.5 239.8C501 254 506 266 510.2 277.6C514 288 517 296 519.7 303.6C519.5 294 518.5 285 516.5 274.500C514 262 511 251 507.1 239.800C502 226 496 216 488.200 206.800C480 197 471 189 462.200 181.900zM489.8 181.9C492 189 496 195.500 500.800 200.500C507 207 514 211 519.700 216.200C525 221 530 226 533.100 232C535 228 535 224 533.900 220.900C533 214 532 208 530.700 203.600C528.500 196 525.500 189 522 181.900zM547.5 176C545 200 542.8 212 542.8 227.400C542.5 245 542 255 542.100 261C542.300 275 544.200 290 544.200 300C544.200 318 544 334 541.100 352C539 365 536.500 372 532.100 379C528 387 526 391 523.100 395.200C519.500 401 517 408 513.200 415C523 411 529 406 535.700 397C541 389 543.500 385 544.700 379C548 370 550.500 362 551.900 352C554 340 556.300 326 556.400 316C556.600 305 556.300 300 556.300 300C556.300 290 555.600 275 555.600 261C555.600 250 556.500 240 557 227.400C557.500 212 559.500 200 561.700 176zM538.4 298C535 311.9 536.4 320.4 518 346A11.4 11.4 0 0 1 499.4 332.8C517.9 307.1 535 311.9 538.4 298zM537 348.4C532.1 357.4 532.4 364.7 514.8 379.2A9.6 9.6 0 0 1 502.6 364.4C520.1 349.9 532.1 357.4 537 348.4zM524 383C518.4 390.7 517.6 397 499.7 408.2A8.5 8.5 0 0 1 490.7 393.8C508.6 382.6 518.4 390.7 524 383zM507.4 412.8C502.7 418.7 502.4 424.3 488.2 432.9A7.3 7.3 0 0 1 480.6 420.5C494.9 411.8 502.7 418.7 507.4 412.8zM571.8 176L570.5 213.700C571 222 572.500 230 574.500 236.700C577.500 246 581.500 251.500 586.700 255.600C590.500 259 594 260.700 597.500 260.700C607 260.700 613.700 250 613.700 238C613.500 231 611 225.500 608.300 220.500C604.500 213 599.500 206 594.800 200.200C589.500 193.500 585 186 582 176zM565.4 241.4C567.1 258.3 586.7 257.3 601.8 291.8A13.2 13.2 0 0 1 577.6 302.4C562.5 267.8 567.1 258.3 565.4 241.4zM564.5 296.2C566 308.9 581.3 307.5 593 333.2A10.6 10.6 0 0 1 573.8 342C562 316.3 566 308.9 564.5 296.2zM561.8 336.7C562.6 346.5 575.1 345.6 583.4 365.7A8.8 8.8 0 0 1 567.2 372.5C558.8 352.4 562.6 346.5 561.8 336.7zM558.2 373.2C558.8 380.2 568.2 379.6 573.7 394.1A7 7 0 0 1 560.7 399.1C555.1 384.6 558.8 380.2 558.2 373.2zM602.35 173.8a52.5 52.5 0 0 0 105 0h-12.150a45.200 45.200 0 0 1 -90.400 -2.600zM613.2 177.2a21.4 21.4 0 1 0 42.7 0a21.4 21.4 0 1 0 -42.7 0zM719 170Q721.7 196.4 722 213.7A9.8 9.8 0 1 1 703.1 210.8Q705 193.8 719 170zM698.7 211.3Q693.4 223.3 690 236.6A7.9 7.9 0 1 1 677.6 227.8Q684.5 216.9 698.7 211.3zM669.7 231.3Q661.5 237.2 654.1 244.6A6.1 6.1 0 1 1 649.3 234Q658.1 229.5 669.7 231.3zM640 234.5Q634.3 235.4 628.6 237.2A3.5 3.5 0 1 1 629 230.5Q634.6 230.6 640 234.5z" fill="#eb9e06"/>
<path d="M706 328.5L705.9 329.3L705.6 330.1L705.3 330.9L705 331.7L704.9 332.5L704.8 333.3L704.6 334.1L704.3 334.9L703.8 335.6L703.2 336.3L702.7 337L702.6 337.7L702.7 338.6L703 339.4L703.3 340.3L703.5 341.2L703.5 342.1L703.2 342.8L702.9 343.6L702.7 344.4L702.5 345.2L702.4 346L702.2 346.8L701.8 347.5L701.1 348L700.3 348.5L699.4 348.9L698.7 349.4L698.3 350.1L698 350.8L697.9 351.7L697.8 352.5L697.6 353.3L697.2 354L696.8 354.7L696.5 355.4L696.2 356.2L696.1 357.1L695.9 358L695.6 358.8L695 359.4L694.2 359.7L693.3 360L692.4 360.1L691.6 360.4L691 360.9L690.5 361.5L690 362.1L689.4 362.6L688.8 363L688.1 363.4L687.5 363.9L687.1 364.5L686.7 365.4L686.4 366.3L686.1 367.2L685.6 368L685 368.4L684.2 368.6L683.3 368.7L682.5 368.8L681.7 369L681 369.3L680.3 369.6L679.6 369.9L678.8 369.9L677.9 369.9L677.1 369.8L676.3 369.9L675.7 370.2L675 370.7L674.4 371.2L673.7 371.3L672.8 370.9L671.8 370L670.8 368.7L669.7 367.3L668.8 366.1L668 365.3L667.4 365.2L666.8 365.6L666.3 366.4L665.8 367.5L665.2 368.5L664.6 369.5L664 370.5L663.3 371.5L662.7 372.5L661.9 373.3L661.2 373.9L660.4 374.2L659.7 374.3L658.9 374.4L658.1 374.5L657.4 374.7L656.6 374.9L655.7 375.1L655 375.1L654.2 374.7L653.5 374.1L652.9 373.3L652.3 372.6L651.6 372.2L650.9 372L650.1 371.9L649.3 371.9L648.6 371.7L647.9 371.5L647.2 371.2L646.5 371L645.7 371L644.8 371.2L643.9 371.4L643 371.5L642.2 371.3L641.6 370.7L641.1 370L640.6 369.2L640.1 368.5L639.5 368L638.9 367.5L638.2 367.1L637.7 366.5L637.2 365.9L636.7 365.2L636.2 364.6L635.6 364.1L634.8 363.9L633.9 363.9L633 363.8L632.1 363.7L631.4 363.3L630.8 362.7L630.5 361.9L630.1 361.1L629.8 360.3L629.5 359.5L629.5 358.5L629.7 357.2L630.4 355.7L631.3 353.9L632.4 352.2L633.2 350.6L633.6 349.6L633.3 349L632.4 348.9L631 349.1L629.4 349.4L627.7 349.7L626.1 349.8L624.7 349.7L623.5 349.5L622.4 349.2L621.5 348.8L620.9 348.2L620.6 347.5L620.6 346.6L620.8 345.7L621 344.7L621.1 343.8L621 343L620.7 342.3L620.2 341.7L619.8 341L619.5 340.2L619.3 339.5L619.1 338.7L618.8 338L618.3 337.3L617.7 336.6L617.1 335.8L616.7 335.1L616.7 334.2L616.9 333.4L617.3 332.5L617.7 331.7L618 330.9L618.1 330.1L618.1 329.3L618.1 328.5L618.2 327.7L618.4 326.9L618.6 326.2L618.7 325.4L618.6 324.6L618.2 323.8L617.7 322.9L617.3 322L617.1 321.2L617.1 320.3L617.5 319.6L617.9 318.8L618.3 318.1L618.6 317.4L618.8 316.6L619.1 315.8L619.5 315.1L620 314.5L620.7 313.9L621.3 313.3L621.7 312.6L621.9 311.8L621.8 310.9L621.6 310L621.5 309.1L621.6 308.2L621.9 307.5L622.4 306.8L623 306.2L623.6 305.7L624.4 305.3L625.4 305L626.8 305L628.5 305.4L630.5 305.9L632.3 306.4L633.7 306.7L634.5 306.6L634.6 305.9L634.1 304.6L633.3 303.1L632.5 301.4L631.9 299.8L631.5 298.4L631.4 297.2L631.4 296.1L631.4 295L631.6 293.9L631.9 293.1L632.4 292.4L633.1 292.1L634 291.9L634.9 291.9L635.8 291.8L636.6 291.6L637.2 291.2L637.8 290.7L638.4 290.2L639.1 289.8L639.8 289.5L640.5 289.2L641.1 288.8L641.6 288.1L642.1 287.3L642.5 286.4L643 285.6L643.7 285.1L644.4 284.9L645.3 285L646.1 285.1L647 285.1L647.7 284.9L648.5 284.7L649.2 284.6L650 284.6L650.8 284.8L651.7 285.1L652.5 285.4L653.3 285.6L654 285.8L654.8 286L655.6 286.5L656.4 287.5L657.2 288.7L658 290.1L658.7 291.1L659.4 291.4L660 291.1L660.6 290L661.2 288.6L661.9 287.2L662.6 286.1L663.3 285.4L664.1 285.1L664.8 285L665.6 284.7L666.4 284.4L667.2 284L668 283.6L668.8 283.4L669.5 283.5L670.3 283.6L671.1 283.7L671.8 283.7L672.7 283.6L673.5 283.4L674.3 283.5L675 283.8L675.6 284.5L676.2 285.3L676.7 286.2L677.2 286.8L677.9 287.3L678.6 287.5L679.3 287.7L680.1 287.9L680.7 288.2L681.4 288.6L682 289L682.8 289.2L683.6 289.3L684.6 289.2L685.5 289.2L686.3 289.4L686.9 289.9L687.4 290.6L687.8 291.5L688.1 292.3L688.5 293L689.1 293.6L689.6 294.2L690.2 294.7L690.6 295.4L690.9 296.2L691.3 296.9L691.7 297.5L692.4 298L693.2 298.2L694.2 298.4L695.1 298.7L695.8 299.1L696.3 299.7L696.7 300.4L697 301.2L697.3 302L697.6 302.7L697.8 303.5L697.9 304.4L697.6 305.5L696.9 306.9L695.8 308.4L694.6 309.9L693.5 311.2L692.7 312.4L692.5 313.2L692.8 313.7L693.6 314L694.9 314.2L696.4 314.3L698 314.4L699.6 314.6L701.1 314.9L702.4 315.3L703.4 315.8L703.9 316.5L704.1 317.3L703.9 318.2L703.5 319.1L703.2 319.9L703.1 320.7L703.2 321.5L703.5 322.3L703.9 323L704.1 323.8L704.3 324.5L704.3 325.3L704.4 326.1L704.7 326.9L705.2 327.7z" fill="#45b8a0" stroke="#93dccc" stroke-width="1.600" stroke-linejoin="round"/>
<path d="M692.5 328.5L692.7 329.1L692.7 329.6L692.6 330.1L692.3 330.7L692.1 331.2L691.9 331.7L691.7 332.2L691.7 332.8L691.6 333.3L691.5 333.8L691.3 334.4L691 334.8L690.5 335.3L689.9 335.7L689.2 336L688.6 336.4L688.1 336.7L687.7 337.1L687.6 337.6L687.7 338.2L688 338.8L688.3 339.4L688.5 340.1L688.7 340.7L688.7 341.3L688.6 341.9L688.4 342.4L688.2 342.9L688 343.3L687.8 343.8L687.7 344.4L687.6 345L687.5 345.6L687.4 346.2L687.2 346.7L686.8 347.1L686.2 347.3L685.5 347.5L684.7 347.5L683.8 347.5L683.1 347.5L682.4 347.6L681.9 347.8L681.6 348.2L681.3 348.6L681.2 349.2L681 349.7L680.7 350.2L680.4 350.6L680.1 351L679.7 351.3L679.3 351.7L678.9 352L678.6 352.5L678.4 353.1L678.3 353.8L678.1 354.5L677.9 355.2L677.6 355.9L677.2 356.3L676.7 356.5L676.1 356.5L675.4 356.4L674.7 356.1L674 355.9L673.3 355.7L672.7 355.6L672.2 355.6L671.7 355.8L671.2 356L670.7 356.2L670.2 356.3L669.7 356.3L669.2 356.3L668.6 356.2L668.1 356.1L667.6 356.2L667.1 356.4L666.7 356.8L666.3 357.4L665.9 358L665.5 358.8L665 359.4L664.5 359.9L664 360.2L663.4 360.2L662.9 360.1L662.3 359.8L661.7 359.5L661.2 359.2L660.7 359L660.1 358.9L659.6 358.9L659.1 358.8L658.6 358.7L658 358.5L657.6 358.1L657.1 357.6L656.7 357.1L656.3 356.5L655.8 356.1L655.4 355.8L654.9 355.8L654.4 355.9L653.8 356.3L653.1 356.7L652.5 357.1L651.8 357.4L651.2 357.6L650.6 357.5L650.1 357.4L649.6 357.2L649.1 356.9L648.7 356.7L648.1 356.5L647.6 356.4L647 356.3L646.5 356.2L645.9 356L645.5 355.7L645.2 355.1L645 354.4L644.9 353.6L644.8 352.8L644.7 352.1L644.5 351.4L644.3 351L643.9 350.7L643.4 350.5L642.8 350.4L642.2 350.4L641.6 350.3L641 350.1L640.6 349.9L640.2 349.5L639.8 349.2L639.4 348.9L638.9 348.6L638.3 348.4L637.7 348.2L637 348.1L636.3 347.9L635.7 347.7L635.3 347.3L635 346.8L635 346.2L635.1 345.5L635.3 344.7L635.5 343.9L635.7 343.2L635.7 342.6L635.7 342.1L635.5 341.6L635.2 341.2L634.9 340.8L634.6 340.3L634.4 339.9L634.3 339.4L634.3 338.8L634.2 338.3L634.1 337.8L633.8 337.4L633.4 337L632.8 336.6L632.1 336.3L631.3 335.9L630.7 335.5L630.1 335.1L629.8 334.6L629.7 334L629.9 333.5L630.1 332.9L630.5 332.3L630.8 331.7L631 331.1L631.1 330.6L631.2 330.1L631.2 329.5L631.2 329L631.4 328.5L631.6 328L632 327.5L632.4 327L632.8 326.5L633.2 326L633.3 325.6L633.3 325.1L633.1 324.5L632.6 324L632.1 323.4L631.6 322.7L631.2 322.1L630.9 321.5L630.9 320.9L631 320.4L631.2 319.9L631.5 319.4L631.8 318.9L632 318.4L632.1 317.9L632.2 317.4L632.3 316.8L632.5 316.3L632.8 315.9L633.3 315.5L634 315.2L634.7 315L635.5 314.8L636.2 314.6L636.8 314.4L637.2 314.1L637.4 313.7L637.5 313.1L637.5 312.5L637.4 311.8L637.3 311.2L637.4 310.5L637.5 310L637.8 309.5L638.1 309.1L638.4 308.7L638.7 308.2L638.9 307.7L639 307.1L639.2 306.5L639.3 305.8L639.5 305.2L639.8 304.8L640.3 304.5L641 304.4L641.7 304.4L642.5 304.6L643.3 304.8L644 304.9L644.7 304.9L645.2 304.8L645.6 304.5L646 304.2L646.3 303.8L646.7 303.4L647.1 303L647.5 302.8L648 302.6L648.5 302.4L648.9 302.2L649.4 301.9L649.7 301.4L650 300.9L650.3 300.2L650.6 299.4L650.9 298.7L651.3 298.2L651.8 297.8L652.4 297.7L653 297.8L653.6 298.1L654.3 298.4L654.9 298.8L655.5 299L656 299.2L656.6 299.2L657.1 299.2L657.6 299.1L658.1 299.1L658.6 299.2L659.2 299.4L659.7 299.7L660.2 300L660.7 300.2L661.2 300.3L661.7 300.2L662.2 299.9L662.7 299.4L663.3 298.8L663.8 298.2L664.4 297.7L665 297.4L665.6 297.3L666.1 297.3L666.7 297.6L667.2 297.9L667.6 298.2L668.1 298.5L668.6 298.7L669.2 298.8L669.7 298.9L670.2 299L670.7 299.3L671.1 299.7L671.5 300.3L671.8 300.9L672.1 301.6L672.3 302.3L672.6 302.8L673 303.2L673.5 303.4L674 303.3L674.7 303.2L675.4 302.9L676.1 302.8L676.7 302.7L677.3 302.7L677.8 302.9L678.3 303.2L678.7 303.5L679.2 303.7L679.7 304L680.2 304.2L680.8 304.3L681.4 304.4L682 304.6L682.4 304.9L682.8 305.4L682.9 306L683 306.7L682.9 307.6L682.8 308.4L682.7 309.1L682.7 309.8L682.9 310.3L683.2 310.7L683.6 311L684.2 311.2L684.7 311.4L685.1 311.7L685.5 312.1L685.8 312.5L686.1 312.9L686.4 313.4L686.7 313.8L687.2 314.1L687.8 314.4L688.4 314.6L689.1 314.9L689.8 315.2L690.4 315.5L690.7 316L690.9 316.5L690.8 317.1L690.6 317.8L690.2 318.5L689.9 319.2L689.6 319.8L689.5 320.4L689.5 320.9L689.6 321.4L689.7 321.9L689.8 322.4L689.9 322.9L689.8 323.4L689.7 324L689.6 324.5L689.4 325L689.4 325.5L689.6 326L690 326.5L690.5 327L691.1 327.5L691.8 328z" fill="#2f8a80"/>
<path d="M682.7 328.5L682.4 328.9L682.1 329.2L681.8 329.6L681.6 329.9L681.4 330.3L681.3 330.6L681.3 331L681.2 331.3L681.1 331.7L681 332L680.9 332.3L680.7 332.6L680.5 332.9L680.2 333.2L679.9 333.5L679.7 333.8L679.6 334.1L679.6 334.5L679.6 334.9L679.8 335.3L680 335.7L680.2 336.2L680.4 336.7L680.5 337.1L680.6 337.6L680.6 337.9L680.4 338.3L680.2 338.6L680 338.9L679.7 339.2L679.4 339.4L679.1 339.7L678.8 339.9L678.6 340.2L678.4 340.5L678.2 340.9L678 341.1L677.7 341.4L677.4 341.6L677 341.8L676.6 341.9L676.1 341.9L675.6 342L675.2 342L674.8 342.1L674.5 342.2L674.2 342.4L674 342.7L673.9 343.1L673.8 343.5L673.7 344L673.7 344.4L673.5 344.9L673.4 345.2L673.2 345.6L672.9 345.8L672.6 346L672.3 346.2L672 346.4L671.7 346.6L671.4 346.9L671.1 347.2L670.9 347.5L670.6 347.8L670.3 348.1L670 348.3L669.7 348.4L669.3 348.5L668.8 348.4L668.4 348.3L667.9 348L667.5 347.8L667 347.6L666.6 347.4L666.2 347.3L665.9 347.3L665.5 347.3L665.2 347.5L664.9 347.7L664.6 347.9L664.3 348.1L664 348.3L663.6 348.4L663.3 348.5L663 348.5L662.6 348.6L662.3 348.6L661.9 348.7L661.6 348.8L661.2 349L660.8 349.3L660.5 349.6L660.1 349.9L659.7 350.1L659.3 350.3L658.9 350.3L658.5 350.2L658.2 350L657.8 349.8L657.5 349.4L657.2 349L656.9 348.6L656.6 348.3L656.3 348L656 347.8L655.7 347.7L655.4 347.6L655 347.5L654.7 347.4L654.4 347.3L654.1 347.1L653.8 346.9L653.5 346.6L653.2 346.4L653 346.1L652.7 346L652.4 345.9L652 345.8L651.6 345.9L651.1 346L650.6 346.1L650.1 346.2L649.6 346.3L649.2 346.3L648.8 346.3L648.4 346.1L648.1 345.8L647.9 345.5L647.7 345.1L647.6 344.8L647.4 344.4L647.2 344L647 343.7L646.8 343.4L646.5 343.2L646.3 342.9L646 342.6L645.9 342.3L645.7 341.9L645.7 341.5L645.6 341.1L645.6 340.7L645.6 340.2L645.6 339.8L645.5 339.5L645.4 339.2L645.1 338.9L644.8 338.8L644.4 338.6L643.9 338.5L643.4 338.3L643 338.2L642.6 338L642.3 337.7L642 337.4L641.9 337.1L641.7 336.8L641.6 336.4L641.5 336.1L641.4 335.7L641.2 335.4L641 335.1L640.8 334.7L640.6 334.4L640.5 334.1L640.4 333.7L640.4 333.3L640.5 332.9L640.6 332.5L640.9 332.1L641.2 331.7L641.5 331.3L641.8 330.9L642 330.5L642.1 330.2L642.1 329.8L641.9 329.5L641.8 329.2L641.6 328.8L641.3 328.5L641.1 328.1L641 327.8L640.9 327.4L640.9 327.1L640.9 326.7L640.9 326.4L640.9 326L640.9 325.6L640.8 325.3L640.7 324.9L640.5 324.5L640.3 324.1L640.1 323.6L640.1 323.2L640.1 322.8L640.2 322.5L640.4 322.1L640.7 321.9L641.2 321.6L641.6 321.4L642.1 321.2L642.5 320.9L642.8 320.7L643.1 320.4L643.3 320.2L643.5 319.9L643.6 319.5L643.7 319.2L643.8 318.9L644 318.6L644.2 318.3L644.4 318L644.7 317.8L644.9 317.5L645.1 317.2L645.3 316.9L645.4 316.6L645.5 316.2L645.5 315.7L645.4 315.3L645.4 314.7L645.4 314.2L645.4 313.8L645.5 313.4L645.7 313L646 312.8L646.4 312.6L646.8 312.5L647.3 312.5L647.7 312.4L648.1 312.3L648.5 312.2L648.8 312.1L649.1 311.9L649.4 311.7L649.8 311.5L650.1 311.4L650.4 311.3L650.8 311.2L651.2 311.2L651.6 311.2L652 311.2L652.4 311.3L652.8 311.2L653.1 311.1L653.4 311L653.6 310.7L653.8 310.3L654 309.8L654.2 309.4L654.5 308.9L654.7 308.5L655 308.2L655.3 308L655.7 307.8L656 307.8L656.4 307.7L656.8 307.7L657.2 307.7L657.5 307.7L657.9 307.6L658.3 307.6L658.6 307.4L659 307.4L659.3 307.3L659.7 307.4L660.1 307.5L660.5 307.7L660.8 308L661.2 308.3L661.5 308.7L661.9 309L662.2 309.2L662.5 309.4L662.9 309.5L663.2 309.4L663.6 309.3L663.9 309.1L664.3 308.9L664.7 308.7L665.1 308.5L665.5 308.5L665.8 308.4L666.2 308.5L666.5 308.6L666.9 308.6L667.3 308.7L667.6 308.7L668 308.7L668.4 308.7L668.8 308.6L669.3 308.5L669.7 308.5L670.1 308.6L670.4 308.8L670.7 309L670.9 309.4L671.1 309.8L671.3 310.3L671.4 310.8L671.6 311.3L671.7 311.7L671.9 312L672.1 312.3L672.4 312.5L672.7 312.7L673 312.8L673.4 312.9L673.7 313.1L674 313.2L674.3 313.5L674.5 313.7L674.8 314L675 314.2L675.3 314.4L675.6 314.6L675.9 314.8L676.3 314.9L676.8 314.9L677.3 315L677.8 315.1L678.2 315.2L678.6 315.4L678.9 315.6L679.1 315.9L679.3 316.3L679.3 316.8L679.3 317.2L679.2 317.7L679.2 318.1L679.1 318.6L679.2 318.9L679.3 319.3L679.4 319.6L679.5 320L679.7 320.3L679.8 320.6L679.8 321L679.8 321.3L679.8 321.7L679.8 322.1L679.7 322.5L679.7 322.9L679.7 323.2L679.8 323.5L680.1 323.8L680.4 324.1L680.8 324.3L681.2 324.6L681.7 324.9L682 325.2L682.4 325.5L682.6 325.9L682.7 326.2L682.7 326.6L682.6 327L682.5 327.4L682.4 327.8L682.3 328.1z" fill="#3aa594"/>
<path d="M660.1 315.5L658.3 295.6M656.1 316.5L648.7 299M667.3 317L675.8 301.1M652.3 319L640.7 306.6M672.7 322.4L685 315.8M674.1 330.3L691.9 332.8M672.1 335.6L686.4 344.8M667.3 340L672.5 349.7M663.9 341.2L667 355.9M655.5 340.2L648 355.5M649.9 335L640.4 340.5M648.4 326.2L630.7 323.1" stroke="#3a0540" stroke-width="1.200" fill="none"/>
<circle cx="661.2" cy="328.5" r="14.2" fill="#4a2748"/>
<circle cx="661.2" cy="328.5" r="10.2" fill="#3a0540"/>
<path d="M1663.8 651.6a5.2 5.2 0 1 0 10.4 0a5.2 5.2 0 1 0 -10.4 0zM1686.2 649.7a7.1 7.1 0 1 0 14.2 0a7.1 7.1 0 1 0 -14.2 0zM1694.7 795a5.2 5.2 0 1 0 10.4 0a5.2 5.2 0 1 0 -10.4 0zM1728.5 827.9a6.6 6.6 0 1 0 13.2 0a6.6 6.6 0 1 0 -13.2 0zM1711.1 653.3a10.5 11.5 0 1 0 21 0a10.5 11.5 0 1 0 -21 0zM1649.2 732.4a21.4 23.3 0 1 0 42.8 0a21.4 23.3 0 1 0 -42.8 0zM1704.9 763.3C1693 781 1675 788.5 1655.7 788.3C1627 787.5 1604.3 765 1604.3 734.6C1604.3 697 1637 664.3 1679.4 664.3C1717 664.3 1744.4 697 1744.4 739.7C1744.4 752 1743 763 1740 773.5C1737.500 782 1734.500 790 1730.700 796.900C1726 805.500 1721 813 1715.100 820.400C1708 829 1700 837 1691.600 843.800C1682 851.500 1671.500 857.500 1660.400 862.600C1650 867.500 1639.500 871 1629.100 873.500C1624.500 874.600 1620 875.400 1615 875.900C1620 874.300 1624.500 872.500 1629.100 870.400C1638.500 866.500 1647.500 862.500 1655.700 857.900C1666 852 1675.500 846 1683.800 839.100C1691.500 832.500 1698.500 825.500 1704.900 817.200C1710.500 810.500 1715.500 804 1719.800 796.900C1723.800 790 1727 782 1729.200 773.500C1732 763 1733.400 752 1733.400 739.700C1733.400 704 1711 676.900 1679.400 676.900C1644 676.900 1615 703 1615 734.600C1615 760 1634 780 1655.700 780.500C1675 781 1690 775 1704.900 763.300zM1681 829.7Q1676.7 819.1 1677.3 808.9A5.8 5.8 0 1 1 1688.4 809.9Q1684.9 819.8 1681 829.7zM1656.9 850.9Q1652.5 836.6 1654.3 823.4A7.3 7.3 0 1 1 1668.3 825.7Q1662.9 838.3 1656.9 850.9zM1629.1 865.7Q1623.8 846.5 1626.7 828.8A9.7 9.7 0 1 1 1645.1 832.4Q1637.5 849.1 1629.1 865.7zM1758.7 724.8Q1749 702.8 1736.3 681.4A12.9 12.9 0 1 1 1760.7 676Q1767.1 698.8 1758.7 724.8zM1755 753.2Q1765.1 731.6 1772.7 708.3A12.1 12.1 0 1 1 1791.8 721.9Q1779.5 741.9 1755 753.2zM1743.2 786.3Q1758 771.3 1771.3 754.1A11.5 11.5 0 1 1 1783.7 772.6Q1767.1 785 1743.2 786.3zM1727.9 813.8Q1743.1 804.4 1757.1 792.3A9.6 9.6 0 1 1 1763.9 809.5Q1748.1 817.3 1727.9 813.8zM1747.2 839.9Q1756.2 832.5 1764.4 823.4A7.8 7.8 0 1 1 1770.8 836.7Q1760.8 841.9 1747.2 839.9zM1768.3 844.1Q1781 840.7 1791.1 844.6A7.8 7.8 0 1 1 1786 858.5Q1777.5 850.4 1768.3 844.1zM1694 872.75C1703 856 1722 845.7 1744.8 845.7C1769 845.7 1789 865 1789 890h-12.7C1776.3 871 1762 856.3 1744.8 856.3C1725 856.3 1707 862 1694 872.75zM1644.700 879C1651 879.500 1658 881.500 1663.500 884.500L1652 888zM1677.600 877C1685 877.500 1692 880 1697.900 884L1686 888zM1747.200 874.300C1741 875.500 1735 878.500 1730 883.500L1740 884C1743.500 881 1746 878 1747.200 874.300z" fill="#ff1a6e"/>
<path d="M1606.5 825.6L1606.9 826.6L1606.7 827.6L1606.4 828.7L1606.2 829.7L1606.2 830.7L1606 831.7L1605.4 832.6L1604.4 833.5L1603.5 834.4L1603.2 835.3L1603.4 836.4L1603.9 837.5L1604.3 838.6L1604.2 839.6L1604 840.6L1603.9 841.6L1604 842.7L1604.1 843.8L1603.7 844.8L1602.8 845.5L1601.5 846.2L1600.4 846.8L1599.8 847.6L1599.6 848.6L1599.4 849.7L1599.1 850.6L1598.6 851.5L1598.2 852.4L1598.2 853.5L1598.4 854.8L1598.5 856L1598 856.9L1596.9 857.5L1595.7 857.9L1594.5 858.4L1593.7 859.1L1592.8 859.7L1591.7 860.1L1590.1 860.1L1588.2 859.8L1586.3 859.5L1584.7 859.3L1583.3 859.3L1582.2 859.4L1581.3 859.8L1580.8 860.5L1580.9 861.8L1581.4 863.7L1582 865.7L1582.3 867.5L1582.1 868.7L1581.4 869.4L1580.5 870L1579.9 870.8L1579.5 872L1579.2 873.3L1578.6 874.3L1577.8 875L1576.9 875.5L1576.1 876.1L1575.3 876.8L1574.5 877.5L1573.4 877.8L1572.1 877.6L1570.8 877.2L1569.6 877L1568.6 877.4L1567.8 878.1L1567 878.9L1566.1 879.4L1565.1 879.8L1564.2 880.3L1563.4 881.1L1562.6 882.1L1561.7 882.8L1560.6 882.9L1559.4 882.4L1558.1 881.8L1557 881.5L1556 881.6L1555 881.8L1553.9 881.9L1552.9 881.8L1551.9 881.8L1550.9 882.2L1549.9 883L1548.9 884L1547.8 884.6L1546.8 884.5L1545.7 884.1L1544.6 883.6L1543.6 883.3L1542.6 883.2L1541.5 883L1540.5 882.4L1539.6 881.7L1538.6 881.2L1537.5 881.4L1536.4 882L1535.2 882.7L1534.1 882.9L1533.1 882.7L1532.1 882.2L1531.1 881.7L1530.2 881.1L1529.4 880.1L1528.9 878.2L1528.8 875.6L1528.8 872.8L1528.7 870.5L1528.3 869.1L1527.5 868.8L1526.4 869.3L1524.9 870.4L1523.3 871.7L1521.5 873.2L1519.6 874.7L1517.8 875.9L1516.4 876.4L1515.4 876L1514.8 875L1514.3 873.9L1513.6 873.1L1512.7 872.6L1511.7 872.2L1510.9 871.6L1510.1 870.9L1509.3 870.3L1508.2 870.1L1506.8 870.1L1505.5 870L1504.5 869.6L1503.9 868.7L1503.6 867.5L1503.2 866.4L1502.6 865.5L1502 864.8L1501.4 863.9L1501.1 862.8L1500.8 861.8L1500.2 860.9L1499.2 860.5L1497.8 860.3L1496.5 859.9L1495.6 859.3L1495.1 858.4L1494.7 857.4L1494.2 856.5L1493.6 855.6L1493.1 854.7L1493.1 853.6L1493.3 852.3L1493.5 851.1L1493.3 850.2L1492.4 849.4L1491.3 848.8L1490.4 848.1L1489.9 847.3L1489.6 846.3L1489.3 845.3L1489.1 844.3L1489.2 843.2L1490.2 841.9L1492.2 840.3L1494.7 838.7L1497 837.3L1498.3 836.1L1498.4 835.2L1497.5 834.6L1495.9 834L1493.9 833.5L1491.7 832.9L1489.4 832.2L1487.1 831.5L1485.5 830.7L1484.7 829.7L1484.9 828.7L1485.5 827.6L1486 826.6L1486.2 825.6L1486.2 824.6L1486.4 823.6L1486.8 822.6L1487.2 821.7L1487.1 820.7L1486.5 819.6L1485.7 818.5L1485.1 817.4L1485.1 816.4L1485.6 815.4L1486.2 814.5L1486.5 813.5L1486.8 812.5L1487.2 811.6L1488 810.8L1489 810L1489.9 809.2L1490.1 808.3L1489.8 807.1L1489.4 805.9L1489.2 804.8L1489.5 803.8L1489.9 802.9L1490.3 801.9L1490.5 800.9L1490.8 799.9L1491.8 799.2L1493.4 798.9L1495.5 798.9L1497.7 799L1499.7 799.1L1501.5 799.1L1503.3 799.1L1504.7 799.1L1505.6 798.6L1505.6 797.6L1504.6 795.9L1503.1 793.7L1501.8 791.5L1501.2 789.7L1501.4 788.6L1502 787.8L1502.7 787.1L1503.3 786.3L1503.8 785.4L1504.6 784.7L1505.5 784.2L1506.3 783.6L1506.9 782.7L1507.1 781.5L1507.4 780.1L1507.8 779.1L1508.7 778.5L1509.9 778.3L1511.1 778.1L1512 777.7L1512.9 777.2L1513.9 776.8L1515.1 776.7L1516.3 776.8L1517.4 776.6L1518.2 775.9L1518.7 774.7L1519.2 773.5L1520 772.6L1520.9 772.2L1522 771.9L1522.9 771.5L1523.9 771L1524.8 770.6L1526 770.6L1527.2 771L1528.5 771.6L1529.6 771.7L1530.5 771.2L1531.4 770.5L1532.3 769.7L1533.2 769.3L1534.2 769L1535.2 768.6L1536.2 768L1537.2 767.3L1538.2 766.9L1539.3 767.2L1540.4 768L1541.6 768.7L1542.6 769.1L1543.6 769L1544.7 768.7L1545.7 768.7L1546.7 768.8L1547.8 768.9L1548.8 768.5L1549.9 767.7L1551 767L1552.1 766.8L1553.2 767.3L1554.1 768.2L1555 769.1L1555.9 770L1556.7 771.1L1557.4 772.7L1557.9 774.9L1558.2 777.4L1558.6 779.4L1559.2 780.5L1560.1 780.4L1561.3 779.6L1562.6 778.3L1564.1 777L1565.6 775.7L1567.2 774.6L1568.7 773.7L1569.9 773.3L1570.9 773.7L1571.6 774.6L1572.2 775.6L1573.1 776.2L1574.2 776.3L1575.5 776.1L1576.7 776.1L1577.7 776.5L1578.6 777L1579.5 777.4L1580.7 777.7L1581.8 777.9L1582.6 778.5L1583.1 779.6L1583.3 781L1583.6 782.2L1584.2 783.1L1585.1 783.5L1586.1 784L1587 784.6L1587.7 785.3L1588.5 785.9L1589.6 786.3L1590.9 786.5L1592.1 786.8L1592.9 787.6L1593.2 788.7L1593.2 790L1593.4 791.1L1593.8 792L1594.4 792.9L1594.7 793.9L1594.7 795L1594.6 796.3L1594.5 797.5L1594.4 798.6L1594.1 799.8L1593.4 801.3L1592.2 802.8L1591.1 804.3L1590.8 805.4L1591.5 806L1593.1 806.3L1595.1 806.5L1596.8 806.8L1598.1 807.3L1599.1 807.9L1600.3 808.6L1601.7 809.2L1603.1 809.8L1604 810.6L1604.5 811.5L1604.7 812.5L1605.1 813.5L1605.6 814.4L1606 815.4L1606 816.4L1605.4 817.5L1604.6 818.7L1604 819.7L1604.1 820.7L1604.6 821.6L1605.1 822.6L1605.3 823.6L1605.4 824.6z" fill="#eb9e06" stroke="#f7dd0c" stroke-width="1.800" stroke-linejoin="round"/>
<path d="M1589 825.6L1589.3 826.4L1589.3 827.1L1589 827.9L1588.6 828.6L1588.2 829.3L1588 830L1587.9 830.8L1587.9 831.5L1587.8 832.3L1587.4 833L1586.7 833.6L1585.8 834.1L1584.8 834.6L1583.9 835.1L1583.1 835.6L1582.8 836.2L1582.9 837L1583.3 837.8L1583.8 838.7L1584.3 839.7L1584.7 840.6L1584.8 841.4L1584.6 842.1L1584.3 842.8L1584 843.5L1583.9 844.2L1583.8 845L1583.8 845.9L1583.8 846.7L1583.7 847.5L1583.2 848.2L1582.5 848.6L1581.4 848.8L1580.2 848.8L1578.9 848.9L1577.8 849L1577.1 849.2L1576.6 849.7L1576.3 850.4L1576.2 851.2L1576 852L1575.8 852.7L1575.4 853.3L1574.9 853.8L1574.4 854.3L1574 854.9L1573.8 855.7L1573.7 856.7L1573.6 857.8L1573.6 858.9L1573.4 859.9L1573 860.6L1572.3 861L1571.4 861L1570.3 860.8L1569.2 860.5L1568.2 860.2L1567.3 860.2L1566.6 860.3L1565.9 860.6L1565.3 861L1564.7 861.3L1564 861.5L1563.2 861.6L1562.5 861.5L1561.7 861.6L1561.1 861.8L1560.5 862.3L1560.1 863.2L1559.8 864.3L1559.4 865.5L1559 866.6L1558.5 867.4L1557.8 867.9L1557.1 868L1556.2 867.8L1555.4 867.5L1554.5 867.2L1553.8 867.1L1553 867.1L1552.3 867.2L1551.5 867.2L1550.8 867.1L1550 866.7L1549.2 866.1L1548.5 865.3L1547.7 864.7L1547.1 864.3L1546.4 864.3L1545.7 864.7L1545 865.4L1544.3 866.3L1543.5 867.1L1542.8 867.8L1542 868.1L1541.2 868.2L1540.5 868L1539.8 867.9L1539 867.7L1538.3 867.8L1537.5 867.9L1536.7 868L1535.9 868L1535.2 867.7L1534.6 867L1534.1 866L1533.7 864.9L1533.3 863.7L1532.9 862.8L1532.4 862.2L1531.7 861.9L1531 862L1530.1 862.3L1529.3 862.5L1528.4 862.6L1527.7 862.5L1527 862.3L1526.4 862L1525.7 861.8L1524.9 861.7L1524 861.8L1523 862L1521.9 862.2L1521 862.2L1520.3 861.9L1519.8 861.3L1519.6 860.3L1519.5 859.1L1519.5 857.9L1519.5 856.8L1519.3 855.9L1519 855.3L1518.4 854.8L1517.8 854.5L1517.2 854.1L1516.7 853.6L1516.4 852.9L1516.1 852.3L1515.7 851.6L1515.3 851.1L1514.5 850.8L1513.6 850.7L1512.4 850.7L1511.2 850.7L1510 850.6L1509.1 850.3L1508.6 849.7L1508.4 848.9L1508.5 848L1508.7 847L1508.8 846.1L1508.8 845.2L1508.6 844.5L1508.4 843.8L1508.1 843.1L1508 842.4L1508.1 841.6L1508.3 840.7L1508.7 839.8L1509 839L1509.1 838.2L1508.7 837.6L1508.1 837.1L1507.1 836.7L1505.9 836.3L1504.8 835.8L1504 835.2L1503.4 834.6L1503.2 833.9L1503.2 833.1L1503.3 832.3L1503.4 831.6L1503.3 830.8L1503 830.1L1502.8 829.4L1502.7 828.6L1502.9 827.8L1503.4 827.1L1504.2 826.3L1505.1 825.6L1506.1 824.9L1506.7 824.2L1507.1 823.6L1507 822.9L1506.5 822.2L1505.9 821.4L1505.3 820.6L1504.9 819.9L1504.6 819.1L1504.6 818.4L1504.7 817.6L1504.8 816.9L1504.7 816.1L1504.4 815.3L1504 814.4L1503.7 813.6L1503.5 812.7L1503.7 812L1504.3 811.3L1505.3 810.9L1506.4 810.5L1507.6 810.2L1508.7 809.9L1509.4 809.5L1509.9 808.9L1510.1 808.2L1510.2 807.5L1510.2 806.7L1510.4 806.1L1510.8 805.4L1511.2 804.9L1511.7 804.3L1512 803.7L1512 802.9L1511.9 801.9L1511.6 800.8L1511.3 799.7L1511.1 798.6L1511.3 797.7L1511.7 797.1L1512.5 796.8L1513.6 796.7L1514.6 796.6L1515.6 796.6L1516.5 796.4L1517.2 796.1L1517.8 795.6L1518.3 795.2L1518.9 794.8L1519.6 794.5L1520.5 794.4L1521.3 794.4L1522.1 794.3L1522.8 794.1L1523.2 793.5L1523.5 792.6L1523.6 791.5L1523.6 790.2L1523.7 789.1L1524 788.1L1524.5 787.4L1525.2 787.1L1526 787L1526.9 787L1527.7 786.9L1528.4 786.7L1529.1 786.4L1529.7 786.1L1530.4 785.9L1531.2 785.8L1532.1 786.1L1533 786.6L1534 787.2L1534.9 787.8L1535.7 788.2L1536.4 788.1L1537 787.7L1537.5 787L1538 786L1538.6 785.1L1539.2 784.4L1539.8 783.9L1540.5 783.6L1541.3 783.5L1542 783.4L1542.7 783.3L1543.5 782.9L1544.2 782.4L1544.9 782L1545.7 781.7L1546.5 781.8L1547.2 782.3L1547.9 783.1L1548.6 784.1L1549.2 785.2L1549.9 786.1L1550.5 786.6L1551.2 786.8L1551.9 786.7L1552.6 786.4L1553.4 786.1L1554.1 786L1554.8 786L1555.5 786.2L1556.2 786.3L1556.9 786.4L1557.7 786.2L1558.6 785.9L1559.6 785.3L1560.6 784.8L1561.5 784.4L1562.3 784.4L1563 784.8L1563.5 785.6L1563.9 786.7L1564.1 787.8L1564.4 788.8L1564.8 789.6L1565.3 790.2L1565.9 790.6L1566.6 790.9L1567.2 791.3L1567.7 791.8L1568.1 792.4L1568.4 793.1L1568.8 793.8L1569.4 794.2L1570.1 794.4L1571 794.3L1572.2 794.1L1573.4 793.7L1574.6 793.5L1575.5 793.6L1576.3 794L1576.7 794.6L1577 795.4L1577.1 796.3L1577.3 797.2L1577.6 797.9L1578 798.5L1578.4 799.1L1578.8 799.7L1579.1 800.5L1579.1 801.3L1579 802.3L1578.7 803.3L1578.5 804.3L1578.5 805.1L1578.8 805.7L1579.5 806.1L1580.5 806.3L1581.6 806.5L1582.8 806.7L1583.7 807.1L1584.4 807.6L1584.8 808.2L1585.1 808.9L1585.3 809.6L1585.5 810.3L1585.9 811L1586.5 811.6L1587 812.2L1587.3 812.9L1587.4 813.6L1587.1 814.5L1586.5 815.4L1585.7 816.4L1584.9 817.3L1584.3 818.1L1584 818.8L1584.1 819.5L1584.6 820.1L1585.2 820.7L1585.9 821.4L1586.4 822L1586.7 822.7L1586.8 823.4L1586.9 824.2L1587 824.9z" fill="#b65408"/>
<path d="M1575.9 825.6L1575.3 826.1L1574.7 826.6L1574.2 827.1L1573.9 827.6L1573.7 828L1573.6 828.5L1573.5 829L1573.4 829.5L1573.2 830L1572.9 830.4L1572.5 830.8L1572 831.2L1571.6 831.6L1571.4 832L1571.3 832.5L1571.5 833L1571.9 833.6L1572.4 834.3L1572.9 835L1573.4 835.7L1573.7 836.3L1573.8 836.9L1573.6 837.4L1573.3 837.9L1572.8 838.3L1572.4 838.6L1572 839L1571.6 839.4L1571.4 839.8L1571.1 840.3L1570.9 840.7L1570.5 841.1L1570.1 841.4L1569.5 841.6L1568.7 841.7L1567.9 841.8L1567.2 841.8L1566.5 841.9L1566 842.1L1565.7 842.4L1565.6 842.9L1565.7 843.6L1565.8 844.3L1565.9 845.1L1565.9 845.8L1565.8 846.4L1565.6 846.9L1565.2 847.3L1564.9 847.6L1564.5 848L1564.1 848.4L1563.8 848.8L1563.6 849.3L1563.4 849.9L1563.1 850.4L1562.7 850.8L1562.2 851.1L1561.6 851.1L1560.9 850.9L1560.1 850.6L1559.3 850.2L1558.6 849.8L1557.9 849.6L1557.4 849.5L1556.9 849.7L1556.6 850L1556.2 850.4L1555.9 850.9L1555.6 851.3L1555.2 851.7L1554.8 851.9L1554.3 852.1L1553.8 852.2L1553.4 852.4L1553 852.8L1552.6 853.2L1552.2 853.9L1551.9 854.5L1551.5 855.2L1551 855.8L1550.5 856.1L1550 856.1L1549.4 855.9L1548.8 855.5L1548.3 854.9L1547.7 854.3L1547.2 853.8L1546.7 853.5L1546.2 853.3L1545.7 853.2L1545.2 853.2L1544.7 853.2L1544.3 853.2L1543.8 853L1543.3 852.8L1542.9 852.5L1542.4 852.2L1542 852L1541.5 852.1L1541 852.3L1540.4 852.7L1539.8 853.3L1539.2 853.9L1538.5 854.4L1537.9 854.8L1537.3 854.9L1536.8 854.8L1536.3 854.5L1535.9 854L1535.5 853.5L1535.2 853L1534.8 852.6L1534.4 852.3L1533.9 852L1533.5 851.8L1533 851.5L1532.7 851.2L1532.4 850.6L1532.2 850L1532 849.3L1531.9 848.6L1531.7 848L1531.5 847.5L1531.1 847.3L1530.5 847.3L1529.8 847.4L1529.1 847.7L1528.3 847.9L1527.5 848.1L1526.9 848.1L1526.3 847.9L1525.9 847.6L1525.5 847.2L1525.2 846.8L1524.9 846.4L1524.5 846.1L1524 845.8L1523.5 845.6L1523 845.3L1522.6 845L1522.3 844.5L1522.3 843.9L1522.4 843.2L1522.6 842.4L1522.9 841.6L1523.2 840.8L1523.4 840.1L1523.3 839.6L1523.1 839.2L1522.7 838.9L1522.2 838.6L1521.6 838.4L1521 838.2L1520.5 837.9L1520.2 837.5L1519.9 837.1L1519.7 836.7L1519.4 836.2L1519.1 835.8L1518.6 835.4L1518.1 835.1L1517.4 834.8L1516.8 834.4L1516.3 834L1515.9 833.6L1515.9 833L1516 832.4L1516.4 831.8L1517 831.2L1517.6 830.6L1518.1 830L1518.5 829.4L1518.7 828.9L1518.7 828.4L1518.6 828L1518.4 827.5L1518.3 827L1518.2 826.6L1518.3 826.1L1518.5 825.6L1518.6 825.1L1518.7 824.7L1518.6 824.2L1518.3 823.7L1517.9 823.2L1517.3 822.6L1516.6 822L1516.1 821.4L1515.6 820.8L1515.4 820.3L1515.5 819.7L1515.8 819.3L1516.3 818.8L1516.9 818.4L1517.5 818L1518 817.6L1518.3 817.2L1518.6 816.8L1518.8 816.3L1519 815.9L1519.3 815.5L1519.7 815.1L1520.2 814.8L1520.8 814.5L1521.4 814.3L1521.9 814L1522.3 813.7L1522.5 813.2L1522.4 812.7L1522.2 812L1521.8 811.3L1521.5 810.5L1521.2 809.7L1521.1 809L1521.2 808.4L1521.4 808L1521.8 807.6L1522.3 807.3L1522.7 807L1523.1 806.6L1523.4 806.2L1523.7 805.8L1524 805.3L1524.3 804.9L1524.7 804.6L1525.3 804.4L1526 804.4L1526.8 804.6L1527.6 804.8L1528.4 804.9L1529 805L1529.6 805L1529.9 804.7L1530.2 804.2L1530.3 803.6L1530.4 802.9L1530.5 802.2L1530.7 801.6L1531 801.1L1531.3 800.7L1531.8 800.5L1532.2 800.2L1532.6 799.9L1533 799.5L1533.3 799L1533.6 798.4L1533.9 797.8L1534.3 797.3L1534.7 797L1535.2 796.9L1535.8 797L1536.5 797.3L1537.2 797.8L1537.9 798.4L1538.5 798.9L1539.1 799.2L1539.7 799.4L1540.1 799.4L1540.6 799.1L1541 798.9L1541.4 798.6L1541.9 798.4L1542.3 798.3L1542.8 798.2L1543.3 798.3L1543.8 798.2L1544.3 798.1L1544.7 797.8L1545.2 797.4L1545.7 796.8L1546.2 796.1L1546.8 795.5L1547.3 795.1L1547.9 794.8L1548.4 794.9L1548.9 795.2L1549.4 795.7L1549.8 796.3L1550.2 796.9L1550.7 797.5L1551.1 797.9L1551.5 798.1L1552 798.3L1552.5 798.4L1552.9 798.6L1553.4 798.9L1553.8 799.2L1554.1 799.7L1554.4 800.2L1554.8 800.6L1555.2 800.9L1555.6 801L1556.2 800.9L1556.8 800.6L1557.6 800.1L1558.3 799.7L1559.1 799.3L1559.8 799.1L1560.4 799.1L1560.9 799.3L1561.2 799.7L1561.6 800.2L1561.9 800.7L1562.2 801.2L1562.5 801.6L1562.9 801.9L1563.4 802.2L1563.8 802.5L1564.1 802.8L1564.4 803.4L1564.5 804L1564.5 804.7L1564.4 805.5L1564.3 806.3L1564.3 807L1564.5 807.4L1564.8 807.8L1565.3 807.9L1566 807.9L1566.8 807.9L1567.5 807.9L1568.2 808L1568.8 808.2L1569.3 808.5L1569.6 808.9L1569.9 809.3L1570.2 809.7L1570.5 810.1L1571 810.4L1571.5 810.7L1572 811L1572.5 811.4L1572.8 811.8L1573 812.3L1572.9 812.9L1572.6 813.6L1572.2 814.4L1571.7 815.1L1571.2 815.8L1570.9 816.4L1570.8 816.9L1571 817.4L1571.2 817.8L1571.7 818.2L1572.1 818.5L1572.5 818.9L1572.8 819.4L1572.9 819.8L1573 820.3L1573.1 820.8L1573.3 821.2L1573.6 821.7L1574 822.1L1574.6 822.6L1575.2 823L1575.8 823.5L1576.3 824L1576.6 824.5L1576.5 825.1z" fill="#eb9e06"/>
<path d="M1540.4 808.4L1534.3 788.3M1551.3 808.5L1558.4 786.6M1557.3 811.8L1572.1 794.2M1560.8 815.8L1578.4 804.4M1563.7 825.9L1587.7 826.3M1559.5 837.2L1571 846.8M1549.7 843.1L1553.8 860.7M1539 842.3L1533 857.1M1531.9 837.2L1518.1 848.7M1528.2 829.6L1509.6 833.9M1527.9 823.1L1504.1 819.8M1531.5 814.5L1518.1 804.1" stroke="#3a0540" stroke-width="1.400" fill="none"/>
<circle cx="1545.7" cy="825.6" r="18.2" fill="#b65408"/>
<circle cx="1545.7" cy="825.6" r="12.4" fill="#3a0540"/>
</g>
</defs>
<rect x="500" y="198" width="1200" height="675" fill="#3a0540"/>
<g clip-path="url(#cv)"><use href="#deco"/></g>
<g font-family="'DejaVu Sans','Liberation Sans',sans-serif" font-weight="bold" font-size="52" fill="#ff9e0c" stroke="#ff9e0c" stroke-width="1.6" stroke-linejoin="round">
<text x="913.400" y="314.900"><tspan textLength="38.300" lengthAdjust="spacingAndGlyphs">...</tspan><tspan x="954.300" textLength="332.300" lengthAdjust="spacingAndGlyphs">And the same</tspan></text>
<text x="919" y="384.500" textLength="362.200" lengthAdjust="spacingAndGlyphs">goes for tables</text>
</g>
<path d="M667.9 512.7V534l4.600-3.900 3.700 6.700 3.600-.800-2.500-6.800 6.700-.500z" fill="#fff" stroke="#1a0020" stroke-width=".800"/>
</svg>

<div class="a" style="left:0;top:0;width:1869px;height:889px;will-change:transform">
<span class="t" style="left:31.0px;top:10px;font-size:18.5px;letter-spacing:-1.00px;color:#fff;">File</span>
<span class="t" style="left:196.5px;top:10px;font-size:18.5px;letter-spacing:-0.70px;color:#fff;">Insert</span>
<span class="t" style="left:279.0px;top:10px;font-size:18.5px;letter-spacing:-0.40px;color:#fff;">Design</span>
<span class="t" style="left:373.0px;top:10px;font-size:18.5px;letter-spacing:-0.50px;color:#fff;">Transitions</span>
<span class="t" style="left:496.5px;top:10px;font-size:18.5px;letter-spacing:-0.39px;color:#fff;">Animations</span>
<span class="t" style="left:624.0px;top:10px;font-size:18.5px;letter-spacing:-0.56px;color:#fff;">Slide Show</span>
<span class="t" style="left:750.5px;top:10px;font-size:18.5px;letter-spacing:-1.30px;color:#fff;">Review</span>
<span class="t" style="left:844.0px;top:10px;font-size:18.5px;letter-spacing:-1.00px;color:#fff;">View</span>
<span class="t" style="left:919.5px;top:10px;font-size:18.5px;letter-spacing:-0.50px;color:#fff;">Help</span>
<span class="t" style="left:109.0px;top:10px;font-size:18.5px;letter-spacing:-0.07px;color:#B7472A;">Home</span>
<span class="t" style="left:1796.5px;top:12px;font-size:18.5px;letter-spacing:-0.88px;color:#fff;">Share</span>
<span class="t" style="left:21.7px;top:106px;font-size:17.3px;letter-spacing:-0.65px;color:#333;">Paste</span>
<span class="t" style="left:162.7px;top:106px;font-size:17.3px;letter-spacing:-0.15px;color:#333;">New</span>
<span class="t" style="left:154.5px;top:130px;font-size:17.3px;letter-spacing:0.08px;color:#333;">Slide</span>
<span class="t" style="left:244.2px;top:57px;font-size:17.3px;letter-spacing:0.24px;color:#333;">Layout</span>
<span class="t" style="left:244.2px;top:92px;font-size:17.3px;letter-spacing:-0.90px;color:#333;">Reset</span>
<span class="t" style="left:243.9px;top:127px;font-size:17.3px;letter-spacing:0.02px;color:#333;">Section</span>
<span class="t" style="left:1246.3px;top:106px;font-size:17.3px;letter-spacing:0.28px;color:#333;">Arrange</span>
<span class="t" style="left:1322.8px;top:106px;font-size:17.3px;letter-spacing:0.15px;color:#b1b1b1;">Quick</span>
<span class="t" style="left:1315.9px;top:129px;font-size:17.3px;letter-spacing:-0.54px;color:#b1b1b1;">Styles</span>
<span class="t" style="left:1409.8px;top:56px;font-size:17.3px;letter-spacing:-0.13px;color:#b1b1b1;">Shape Fill</span>
<span class="t" style="left:1409.8px;top:90px;font-size:17.3px;letter-spacing:0.20px;color:#b1b1b1;">Shape Outline</span>
<span class="t" style="left:1409.8px;top:124px;font-size:17.3px;letter-spacing:-0.15px;color:#b1b1b1;">Shape Effects</span>
<span class="t" style="left:1597.3px;top:55px;font-size:17.3px;letter-spacing:-0.13px;color:#333;">Find</span>
<span class="t" style="left:1597.3px;top:89px;font-size:17.3px;letter-spacing:-0.55px;color:#333;">Replace</span>
<span class="t" style="left:1597.0px;top:124px;font-size:17.3px;letter-spacing:-0.40px;color:#333;">Select</span>
<span class="t" style="left:1713.0px;top:106px;font-size:17.3px;letter-spacing:0.35px;color:#333;">Dictate</span>
<span class="t" style="left:1799.3px;top:106px;font-size:17.3px;letter-spacing:0.30px;color:#333;">Design</span>
<span class="t" style="left:1805.8px;top:130px;font-size:17.3px;letter-spacing:-0.12px;color:#333;">Ideas</span>
<span class="t" style="left:534.0px;top:69px;font-size:17.3px;letter-spacing:-0.10px;color:#b9b9b9;">14</span>
<span class="t" style="left:21.2px;top:162px;font-size:16px;letter-spacing:0.06px;color:#444;">Clipboard</span>
<span class="t" style="left:214.6px;top:162px;font-size:16px;letter-spacing:-0.48px;color:#444;">Slides</span>
<span class="t" style="left:502.8px;top:162px;font-size:16px;letter-spacing:-0.27px;color:#444;">Font</span>
<span class="t" style="left:823.7px;top:162px;font-size:16px;letter-spacing:-0.43px;color:#444;">Paragraph</span>
<span class="t" style="left:1242.8px;top:162px;font-size:16px;letter-spacing:0.15px;color:#444;">Drawing</span>
<span class="t" style="left:1599.6px;top:162px;font-size:16px;letter-spacing:0.08px;color:#444;">Editing</span>
<span class="t" style="left:1721.5px;top:162px;font-size:16px;letter-spacing:-0.57px;color:#444;">Voice</span>
<span class="t" style="left:1794.6px;top:162px;font-size:16px;letter-spacing:-0.24px;color:#444;">Designer</span>
<span class="t" style="left:616.3px;top:65px;font-size:23px;letter-spacing:-0.60px;color:#ababab;">A</span>
<span class="t" style="left:648.9px;top:70px;font-size:19px;letter-spacing:-0.70px;color:#ababab;">A</span>
<span class="t" style="left:691.4px;top:64px;font-size:17px;letter-spacing:-2.60px;color:#b3b3b3;">A</span>
<span class="t" style="left:356.8px;top:110px;font-size:22.5px;letter-spacing:-2.70px;color:#ababab;font-weight:bold;">B</span>
<span class="t" style="left:389.4px;top:110px;font-size:23.5px;letter-spacing:1.20px;color:#ababab;font-family:'Liberation Serif',serif;font-weight:bold;font-style:italic;">I</span>
<span class="t" style="left:420.0px;top:109px;font-size:22px;letter-spacing:-1.00px;color:#ababab;-webkit-text-stroke:.5px #ababab;">U</span>
<span class="t" style="left:452.6px;top:110px;font-size:22.5px;letter-spacing:-1.70px;color:#ababab;font-weight:bold;text-shadow:1.5px 1.5px 1.5px #c8c8c8;">S</span>
<span class="t" style="left:478.8px;top:114px;font-size:19px;letter-spacing:-2.45px;color:#b3b3b3;">abc</span>
<span class="t" style="left:514.6px;top:111px;font-size:16.3px;letter-spacing:0.70px;color:#b3b3b3;transform:scaleX(.86);transform-origin:0 0;">AV</span>
<span class="t" style="left:560.3px;top:112px;font-size:21px;letter-spacing:-2.00px;color:#ababab;">Aa</span>
<span class="t" style="left:617.5px;top:108px;font-size:14px;letter-spacing:-0.20px;color:#b3b3b3;">ab</span>
<span class="t" style="left:671.7px;top:109px;font-size:24px;letter-spacing:-0.40px;color:#ababab;">A</span>
<span class="t" style="left:795.0px;top:64px;font-size:8.5px;letter-spacing:-1.50px;color:#b3b3b3;">1</span>
<span class="t" style="left:795.0px;top:72px;font-size:8.5px;letter-spacing:-1.00px;color:#b3b3b3;">2</span>
<span class="t" style="left:795.0px;top:80px;font-size:8.5px;letter-spacing:-1.00px;color:#b3b3b3;">3</span>
<span class="t" style="left:975.0px;top:51px;font-size:17.5px;letter-spacing:0.00px;color:#b3b3b3;">A</span>
<span class="t" style="left:1039.8px;top:60px;font-size:9.5px;letter-spacing:-1.10px;color:#3c9db3;font-weight:bold;">A</span>
<span class="t" style="left:1570.3px;top:86px;font-size:13.5px;letter-spacing:1.10px;color:#555;">ab</span>
<span class="t" style="left:1578.8px;top:96px;font-size:13.5px;letter-spacing:-1.80px;color:#444;">a</span>
<span class="t" style="left:1586.2px;top:96px;font-size:13.5px;letter-spacing:-0.60px;color:#3c9db3;">c</span>
<span class="t" style="left:6.9px;top:196px;font-size:22.4px;letter-spacing:-1.60px;color:#483c46;">18</span>
<span class="t" style="left:6.9px;top:334px;font-size:22.4px;letter-spacing:-1.60px;color:#483c46;">19</span>
<span class="t" style="left:5.6px;top:472px;font-size:22.4px;letter-spacing:-0.30px;color:#483c46;">20</span>
<span class="t" style="left:5.6px;top:610px;font-size:22.4px;letter-spacing:-2.60px;color:#b7472a;">21</span>
<span class="t" style="left:5.6px;top:748px;font-size:22.4px;letter-spacing:-0.30px;color:#483c46;">22</span>
</div>
</body></html>
